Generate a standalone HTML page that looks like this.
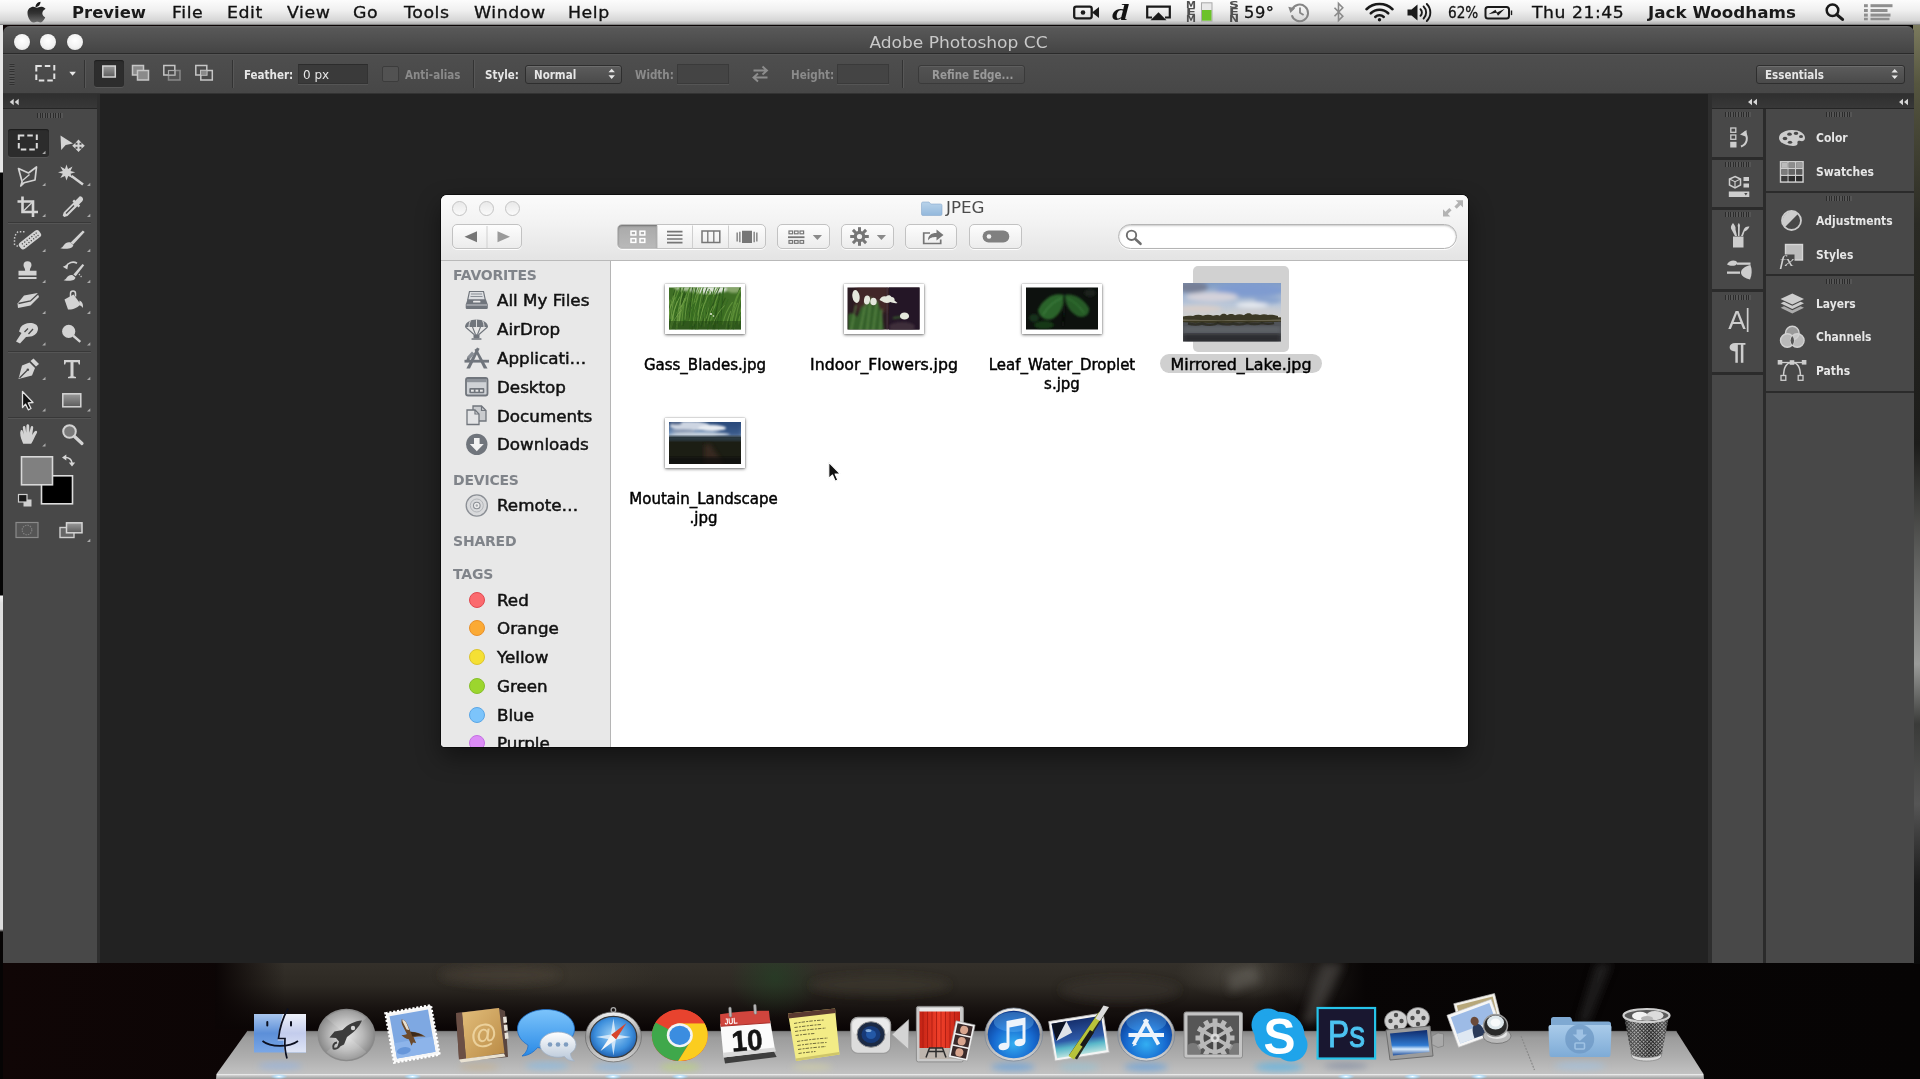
<!DOCTYPE html>
<html lang="en">
<head>
<meta charset="utf-8">
<title>Adobe Photoshop CC</title>
<style>
*{box-sizing:border-box;margin:0;padding:0}
html,body{width:1920px;height:1079px;overflow:hidden;background:#070303}
body{position:relative;font-family:"DejaVu Sans","Liberation Sans",sans-serif;color:#000}
.abs{position:absolute}
/* ---------- wallpaper ---------- */
#wall{left:0;top:0;width:1920px;height:1079px;background:linear-gradient(90deg,#100606 0,#0b0505 300px,#080505 1300px,#060404 1920px)}
#wallblur{left:215px;top:963px;width:1150px;height:66px;background:
 linear-gradient(90deg,#0b0505 0,rgba(11,5,5,0) 70px,rgba(11,5,5,0) 1040px,#080505 1150px),
 radial-gradient(ellipse 45px 40px at 560px 14px,rgba(34,70,38,.55),rgba(34,70,38,0) 100%),
 radial-gradient(ellipse 70px 26px at 1030px 10px,rgba(96,92,84,.5),rgba(96,92,84,0) 100%),
 radial-gradient(ellipse 40px 30px at 1105px 18px,rgba(90,88,84,.45),rgba(90,88,84,0) 100%),
 radial-gradient(ellipse 120px 22px at 330px 12px,rgba(70,64,52,.5),rgba(70,64,52,0) 100%),
 linear-gradient(#34302a 0,#2d2923 22px,#171210 46px,#0a0505 66px)}
#wallright{left:1913px;top:24px;width:7px;height:940px;background:linear-gradient(#7c7b5e 0,#55553f 60px,#2a2a24 200px,#1c1c1a 420px,#6d6e6c 560px,#9a9b99 640px,#3a3b39 700px,#555 780px,#1a1a1a 860px,#0a0a0a 940px)}
/* ---------- menu bar ---------- */
#menubar{left:0;top:0;width:1920px;height:25px;background:linear-gradient(#fcfcfc 0,#f0f0f0 40%,#d6d6d6 82%,#b4b4b4 94%,#6e6e6e 100%)}
#menubar .mi{-webkit-text-stroke:.3px #111;position:absolute;top:1px;height:24px;line-height:25px;font-size:15.5px;white-space:nowrap;color:#111;transform-origin:0 50%;transform:scaleX(1.12);letter-spacing:.5px}
#menubar .b{font-weight:bold;-webkit-text-stroke:0;color:#1a1a1a;transform:scaleX(1.08);letter-spacing:0}
/* ---------- left strip ---------- */
#lstrip{left:0;top:25px;width:3px;height:1054px;background:linear-gradient(#e6e6e6 0,#e6e6e6 147px,#050505 148px,#050505 570px,#f4f4f4 571px,#dedede 578px,#dcdcdc 904px,#060404 907px)}
/* ---------- Photoshop ---------- */
#ps{left:3px;top:26px;width:1911px;height:937px;background:#222;border-radius:7px 7px 0 0;overflow:hidden}
#pstitle{left:0;top:0;width:100%;height:28px;background:linear-gradient(#6a6a6a 0,#585858 2px,#4d4d4d 60%,#444 100%);border-bottom:1px solid #2a2a2a}
#pstitle .t{position:absolute;left:0;width:100%;top:1.5px;transform:scaleX(1.066);line-height:29px;text-align:center;font-size:16px;color:#c9c9c9}
.tl{position:absolute;top:7.5px;width:16px;height:16px;border-radius:50%;background:radial-gradient(circle at 50% 40%,#fff 0,#f2f2f2 55%,#d6d6d6 100%);box-shadow:0 0 1px #333}
#psopt{left:0;top:28px;width:100%;height:40px;background:linear-gradient(#4e4e4e,#474747);border-top:1px solid #555;border-bottom:1px solid #333}
.pt{will-change:transform;position:absolute;font-family:"DejaVu Sans Condensed","DejaVu Sans","Liberation Sans",sans-serif;font-weight:bold;font-size:11.5px;color:#e6e6e6;white-space:nowrap;line-height:14px}
.pt.pl{transform-origin:0 50%;transform:scaleX(1.04)}
.pt.dim{color:#8b8b8b}
.pin{position:absolute;background:#3a3a3a;border:1px solid #333;border-top-color:#2c2c2c;box-shadow:0 1px 0 #555}
.pbtn{position:absolute;background:linear-gradient(#5c5c5c,#4a4a4a);border:1px solid #2e2e2e;border-radius:3px;box-shadow:inset 0 1px 0 #6d6d6d}
.vsep{position:absolute;width:2px;background:linear-gradient(90deg,#333 50%,#575757 50%)}
#ptools{left:0;top:68px;width:94px;height:869px;background:#484848}
#pcanvasL{left:94px;top:68px;width:3px;height:869px;background:#2e2e2e}
.phead{position:absolute;height:14px;background:linear-gradient(#2f2f2f,#383838);border-bottom:1px solid #252525}
.grip{position:absolute;height:5px;background:repeating-linear-gradient(90deg,#2b2b2b 0,#2b2b2b 1px,#555 1px,#555 2.6px)}
.pg{background:#484848}
.hsep{position:absolute;height:2px;background:linear-gradient(#383838 50%,#555 50%)}
/* ---------- Finder ---------- */
#fd{left:441px;top:195px;width:1027px;height:552px;background:#fff;border-radius:6px 6px 4px 4px;overflow:hidden;box-shadow:0 0 0 1px rgba(0,0,0,.5),0 10px 24px rgba(0,0,0,.45)}
#fdtb{left:0;top:0;width:100%;height:66px;background:linear-gradient(#fbfbfb 0,#f3f3f3 40%,#e4e4e4 100%);border-bottom:1px solid #b9b9b9}
#fdside{left:0;top:66px;width:170px;height:486px;background:#e8e8e8;border-right:1px solid #b5b5b5}
.ftl{position:absolute;top:6px;width:15px;height:15px;border-radius:50%;background:linear-gradient(#e9e9e9,#fafafa);border:1px solid #c3c3c3}
.fbtn{position:absolute;top:29px;height:25px;border:1px solid #c2c2c2;border-radius:5px;background:linear-gradient(#fdfdfd,#ececec);box-shadow:0 1px 0 rgba(255,255,255,.9)}
.sh{will-change:transform;position:absolute;left:12px;font-size:14px;font-weight:bold;color:#80848a;line-height:18px;letter-spacing:-.2px}
.si{-webkit-text-stroke:.5px #111;position:absolute;left:55.5px;margin-top:1px;transform-origin:0 50%;transform:scaleX(1.045);font-size:16px;color:#111;line-height:22px;white-space:nowrap;text-shadow:0 1px 0 rgba(255,255,255,.7)}
.sic{position:absolute;left:24px;width:24px;height:24px}
.dot{position:absolute;left:28px;width:16px;height:16px;border-radius:50%}
  .fl{-webkit-text-stroke:.45px #000;position:absolute;margin-top:1.5px;font-size:15px;line-height:19.5px;text-align:center;color:#000;white-space:nowrap}
.th{position:absolute;background:#fff;box-shadow:0 1px 3px rgba(0,0,0,.55),0 0 1px rgba(0,0,0,.4)}
.th i{position:absolute;left:4px;top:4px;right:4px;bottom:4px;display:block}
/* ---------- Dock ---------- */
#dock{left:0;top:990px;width:1920px;height:89px}
#menubar,#ps,#fd,#dock{filter:blur(.4px)}
#pst{will-change:transform}
</style>
</head>
<body>
<div id="wall" class="abs"></div>
<div id="wallblur" class="abs"></div>
<svg class="abs" style="left:0;top:963px" width="1920" height="70" viewBox="0 963 1920 70"><defs><filter id="wb" x="-20%" y="-20%" width="140%" height="140%"><feGaussianBlur stdDeviation="4"/></filter></defs><g filter="url(#wb)"><path d="M1322 963h22l-28 60h-14z" fill="#56544f" opacity=".55"/><path d="M1596 963h16l-24 60h-10z" fill="#3a3a38" opacity=".5"/><path d="M1228 975l26-8 6 14-30 12z" fill="#6a6862" opacity=".45"/><ellipse cx="500" cy="975" rx="60" ry="9" fill="#4a443a" opacity=".5"/><ellipse cx="880" cy="985" rx="70" ry="10" fill="#413b33" opacity=".5"/><ellipse cx="1120" cy="990" rx="60" ry="12" fill="#3c3630" opacity=".5"/></g></svg>
<div id="wallright" class="abs"></div>
<div id="lstrip" class="abs"></div>

<!-- MENUBAR -->
<div id="menubar" class="abs">
<!--MB-->
<svg class="abs" style="left:25.500px;top:.5px" width="23" height="23" viewBox="0 0 20 22" preserveAspectRatio="none"><defs><linearGradient id="apg" x1="0" y1="0" x2="0" y2="1"><stop offset="0" stop-color="#111"/><stop offset=".55" stop-color="#333"/><stop offset="1" stop-color="#6a6a6a"/></linearGradient></defs><path fill="url(#apg)" d="M13.6 0.2c.1 1.3-.4 2.5-1.100 3.400-.8.900-2 1.600-3.200 1.500-.1-1.200.500-2.500 1.200-3.300C11.300.900 12.600.300 13.600.200zM17.300 7.600c-.2.100-2.100 1.200-2.100 3.600 0 2.800 2.400 3.700 2.500 3.800 0 .1-.4 1.300-1.300 2.600-.8 1.100-1.600 2.300-2.900 2.300-1.200 0-1.600-.7-3.100-.7-1.400 0-1.900.8-3.100.8-1.200 0-2.100-1.100-3-2.400C3.200 16 2.300 13.400 2.300 10.900c0-3.900 2.600-6 5.100-6 1.300 0 2.400.9 3.200.9.800 0 2-.9 3.500-.9.600 0 2.600.1 3.900 2z" transform="translate(-1 0.6)"/></svg>
<span class="mi b" id="m1" style="left:71.5px;transform:scaleX(1.06)">Preview</span>
<span class="mi" id="m2" style="left:171.5px">File</span>
<span class="mi" id="m3" style="left:226.5px">Edit</span>
<span class="mi" id="m4" style="left:286.5px">View</span>
<span class="mi" id="m5" style="left:353px">Go</span>
<span class="mi" id="m6" style="left:403.5px">Tools</span>
<span class="mi" id="m7" style="left:474px">Window</span>
<span class="mi" id="m8" style="left:568px">Help</span>
<span class="mi" id="m9" style="left:1243.5px;transform:scaleX(1.05)">59°</span>
<span class="mi" id="m10" style="left:1447.5px;transform:scaleX(.88);letter-spacing:0">62%</span>
<span class="mi" id="m11" style="left:1531.5px;transform:scaleX(1.11)">Thu 21:45</span>
<span class="mi b" id="m12" style="left:1647.5px">Jack Woodhams</span>
<svg class="abs" style="left:1060px;top:0" width="860" height="25" viewBox="1060 0 860 25">
<!-- camera -->
<rect x="1074.200" y="6.700" width="17.500" height="11.600" rx="2" fill="none" stroke="#1a1a1a" stroke-width="2.300"/><circle cx="1083" cy="12.500" r="2.300" fill="#1a1a1a"/><path d="M1092 12.500L1099 7v11z" fill="#1a1a1a"/>
<!-- d -->
<text x="1112" y="19.500" font-family="'Liberation Serif',serif" font-weight="bold" font-style="italic" font-size="24" fill="#111" textLength="16.500" lengthAdjust="spacingAndGlyphs">d</text>
<!-- airplay -->
<path d="M1152 17.500h-4.800v-10.800h22.600v10.800h-4.800" fill="none" stroke="#1a1a1a" stroke-width="2.200"/><path d="M1158.500 12.300l8 7.900h-16z" fill="#1a1a1a"/>
<!-- MEM -->
<g font-family="'DejaVu Sans','Liberation Sans',sans-serif" font-weight="bold" font-size="8.300" fill="#505050"><text x="1186" y="8.200" textLength="10" lengthAdjust="spacingAndGlyphs">M</text><text x="1186" y="15" textLength="10" lengthAdjust="spacingAndGlyphs">E</text><text x="1186" y="21.800" textLength="10" lengthAdjust="spacingAndGlyphs">M</text>
<text x="1229" y="8.200" textLength="10" lengthAdjust="spacingAndGlyphs">S</text><text x="1229" y="15" textLength="10" lengthAdjust="spacingAndGlyphs">E</text><text x="1229" y="21.800" textLength="10" lengthAdjust="spacingAndGlyphs">N</text></g>
<rect x="1201.500" y="2.800" width="10.500" height="18.400" fill="#e9e9e9" stroke="#a9a9a9" stroke-width="1"/><rect x="1202" y="10" width="9.500" height="10.700" fill="#6cc22a"/>
<!-- time machine -->
<g fill="none" stroke="#858585" stroke-width="2"><path d="M1292.200 9.500a8.300 8.300 0 1 1-.4 5.800"/><path d="M1300 7.500v5.200l3.600 2.200" stroke-width="1.800"/></g><path d="M1288.300 6.800l6.800 1.400-4.700 4.800z" fill="#858585"/>
<!-- bluetooth -->
<path d="M1334.500 7.800l8.300 8.400-4.300 4.300v-17l4.300 4.300-8.300 8.400" fill="none" stroke="#8a8a8a" stroke-width="1.600"/>
<!-- wifi -->
<g fill="none" stroke="#1a1a1a" stroke-width="2.600" stroke-linecap="round"><path d="M1366.500 9.200a19 19 0 0 1 26 0"/><path d="M1370.800 13.300a12.600 12.600 0 0 1 17.400 0"/><path d="M1375.200 17a6.300 6.300 0 0 1 8.600 0" stroke-width="2.400"/></g><circle cx="1379.500" cy="19.800" r="1.700" fill="#1a1a1a"/>
<!-- volume -->
<path d="M1407.500 9.500h4l6-5v16l-6-5h-4z" fill="#1a1a1a"/><g fill="none" stroke="#1a1a1a" stroke-width="1.900" stroke-linecap="round"><path d="M1420.500 9.200a4.600 4.600 0 0 1 0 6.600"/><path d="M1423.600 6.500a8.400 8.400 0 0 1 0 12"/><path d="M1426.800 4a12 12 0 0 1 0 17"/></g>
<!-- battery -->
<rect x="1485.500" y="7" width="23.500" height="11.600" rx="2.500" fill="none" stroke="#1a1a1a" stroke-width="2"/><path d="M1510.800 10.500h1.400v4.600h-1.400z" fill="#1a1a1a"/><path d="M1488.500 14.300l7-4.500 1.500 2.600 7.800-3.700-6.800 7-1.700-3z" fill="#1a1a1a"/>
<!-- search -->
<circle cx="1832.500" cy="10.300" r="5.800" fill="none" stroke="#1a1a1a" stroke-width="2.500"/><path d="M1836.800 14.600l5.700 4.800" stroke="#1a1a1a" stroke-width="3.200" stroke-linecap="round"/>
<!-- list -->
<g fill="#8e8e8e"><rect x="1864" y="4.200" width="3.800" height="3"/><rect x="1870.500" y="4.200" width="22" height="3"/><rect x="1864" y="9" width="3.800" height="3"/><rect x="1870.500" y="9" width="17" height="3"/><rect x="1864" y="13.600" width="3.800" height="3"/><rect x="1870.500" y="13.600" width="20" height="3"/><rect x="1864" y="17.800" width="3.800" height="2.500"/><rect x="1870.500" y="17.800" width="19" height="2.500"/></g>
</svg>
<!--/MB-->
</div>

<!-- PHOTOSHOP -->
<div id="ps" class="abs">
<!--PS-->
<div id="pstitle" class="abs"><div class="t"><span id="pst">Adobe Photoshop CC</span></div>
<div class="tl" style="left:10.700px"></div><div class="tl" style="left:37.300px"></div><div class="tl" style="left:64.300px"></div></div>
<div id="psopt" class="abs"></div>
<div id="ptools" class="abs"></div>
<div id="pcanvasL" class="abs"></div>
<div class="phead" style="left:0;top:68px;width:94px;height:15px"></div>
<div class="grip" style="left:34px;top:87px;width:26px"></div>
<div class="abs" style="left:5px;top:103px;width:41px;height:28px;background:#2c2c2c;border-radius:3px;box-shadow:inset 0 1px 1px #1c1c1c,0 1px 0 #555"></div>
<div class="hsep" style="left:5px;top:196px;width:83px"></div>
<div class="hsep" style="left:5px;top:325px;width:83px"></div>
<div class="hsep" style="left:5px;top:391px;width:83px"></div>
<!-- right dock -->
<div class="abs" style="left:1705px;top:68px;width:4px;height:869px;background:#2e2e2e"></div>
<div class="abs" style="left:1709px;top:68px;width:202px;height:869px;background:#2b2b2b"></div>
<div class="phead" style="left:1709px;top:68px;width:202px;height:15px"></div>
<!-- col1 groups -->
<div class="abs pg" style="left:1709px;top:83px;width:51px;height:47.500px"></div>
<div class="abs pg" style="left:1709px;top:133.500px;width:51px;height:47px"></div>
<div class="abs pg" style="left:1709px;top:183.500px;width:51px;height:79.500px"></div>
<div class="abs pg" style="left:1709px;top:266px;width:51px;height:79.500px"></div>
<div class="abs pg" style="left:1709px;top:348.500px;width:51px;height:588.500px"></div>
<div class="grip" style="left:1722px;top:85.500px;width:26px"></div>
<div class="grip" style="left:1722px;top:136px;width:26px"></div>
<div class="grip" style="left:1722px;top:186px;width:26px"></div>
<div class="grip" style="left:1722px;top:268.500px;width:26px"></div>
<!-- col2 groups -->
<div class="abs pg" style="left:1763px;top:83px;width:148px;height:81.500px"></div>
<div class="abs pg" style="left:1763px;top:167px;width:148px;height:80.500px"></div>
<div class="abs pg" style="left:1763px;top:250px;width:148px;height:114.500px"></div>
<div class="abs pg" style="left:1763px;top:367px;width:148px;height:570px"></div>
<div class="grip" style="left:1823px;top:85.500px;width:26px"></div>
<div class="grip" style="left:1823px;top:169.500px;width:26px"></div>
<div class="grip" style="left:1823px;top:252.500px;width:26px"></div>
<span class="pt pl" style="left:1812.500px;top:104.500px">Color</span>
<span class="pt pl" style="left:1812.500px;top:138.500px">Swatches</span>
<span class="pt pl" style="left:1812.500px;top:187.500px">Adjustments</span>
<span class="pt pl" style="left:1812.500px;top:221.500px">Styles</span>
<span class="pt pl" style="left:1812.500px;top:270.500px">Layers</span>
<span class="pt pl" style="left:1812.500px;top:304px">Channels</span>
<span class="pt pl" style="left:1812.500px;top:337.500px">Paths</span>
<!-- options bar widgets -->
<div class="grip" style="left:-2px;top:46px;width:22px;transform:rotate(90deg);opacity:.8"></div>
<div class="vsep" style="left:81px;top:34px;height:28px"></div>
<div class="abs" style="left:91px;top:34px;width:30px;height:27px;background:#2d2d2d;border-radius:3px;box-shadow:inset 0 1px 1px #1e1e1e,0 1px 0 #585858"></div>
<div class="vsep" style="left:229px;top:34px;height:28px"></div>
<span class="pt" id="o1" style="left:240.500px;top:42px">Feather:</span>
<div class="pin" style="left:295px;top:38px;width:70px;height:20px"></div>
<span class="pt" id="o2" style="left:300px;top:42px;font-weight:normal;font-size:12px;font-family:'DejaVu Sans',sans-serif">0 px</span>
<div class="abs" style="left:378.500px;top:39.500px;width:17px;height:16px;background:#525252;border:1px solid #3c3c3c;border-radius:2px"></div>
<span class="pt dim" id="o3" style="left:401.500px;top:42px">Anti-alias</span>
<div class="vsep" style="left:469.500px;top:34px;height:28px"></div>
<span class="pt" id="o4" style="left:481.500px;top:42px">Style:</span>
<div class="pbtn" style="left:522px;top:38.500px;width:96.500px;height:19px"></div>
<span class="pt" id="o5" style="left:530.500px;top:42px">Normal</span>
<span class="pt dim" id="o6" style="left:632px;top:42px">Width:</span>
<div class="pin" style="left:674px;top:38px;width:52px;height:20px;background:#444;border-color:#3a3a3a"></div>
<span class="pt dim" id="o7" style="left:788px;top:42px">Height:</span>
<div class="pin" style="left:834px;top:38px;width:52px;height:20px;background:#444;border-color:#3a3a3a"></div>
<div class="vsep" style="left:898.500px;top:34px;height:28px"></div>
<div class="pbtn" style="left:914.500px;top:39px;width:107.500px;height:19px;background:linear-gradient(#535353,#4a4a4a);border-color:#3a3a3a;box-shadow:inset 0 1px 0 #5e5e5e"></div>
<span class="pt dim" id="o8" style="left:928.500px;top:42px;color:#9a9a9a">Refine Edge...</span>
<div class="pbtn" style="left:1753px;top:38.500px;width:148.500px;height:19.500px"></div>
<span class="pt" id="o9" style="left:1761.500px;top:42px">Essentials</span>
<!--PSSVG-->
<svg class="abs" style="left:0;top:0" width="1911" height="937" viewBox="3 26 1911 937">
<defs><linearGradient id="gsq" x1="0" y1="0" x2="0" y2="1"><stop offset="0" stop-color="#9a9a9a"/><stop offset="1" stop-color="#5c5c5c"/></linearGradient>
<path id="cm" d="M0 0l3.300 0 0 -3.300z" fill="#a9a9a9"/></defs>
<!-- header collapse arrows -->
<g fill="#d6d6d6"><path d="M9.700 102l4-3.200v6.400zM14.700 102l4-3.200v6.400z"/><path d="M1748 102l4-3.200v6.400zM1753 102l4-3.200v6.400z"/><path d="M1899 102l4-3.200v6.400zM1904 102l4-3.200v6.400z"/></g>
<!-- options bar icons -->
<rect x="36.300" y="66" width="18" height="14.500" fill="none" stroke="#e2e2e2" stroke-width="2" stroke-dasharray="5.500 3"/>
<path d="M69.300 71.800h6.600l-3.300 4z" fill="#e8e8e8"/>
<rect x="102.800" y="66" width="12.500" height="11" fill="url(#gsq)" stroke="#d2d2d2" stroke-width="1.500"/>
<g stroke="#c6c6c6" stroke-width="1.500"><rect x="132.500" y="65.500" width="11" height="9.500" fill="#8a8a8a"/><rect x="137.500" y="70.500" width="11" height="9.500" fill="#8a8a8a"/>
<rect x="168.500" y="70.500" width="11.500" height="9.500" fill="#555" stroke="#888"/><rect x="163.800" y="65.500" width="11" height="9.500" fill="#4a4a4a"/><rect x="168.500" y="70.500" width="6.300" height="4.500" fill="#4a4a4a" stroke="#aaa" stroke-width="1.200"/>
<rect x="195.800" y="65.500" width="11" height="9.500" fill="none"/><rect x="200.800" y="70.500" width="11.500" height="9.500" fill="none"/><rect x="201" y="70.700" width="5.600" height="4.100" fill="#8a8a8a" stroke="none"/></g>
<!-- dropdown arrows -->
<g fill="#e6e6e6"><path d="M608.500 72.300l3.200-3.600 3.200 3.600zM608.500 75.300l3.200 3.600 3.200-3.600z"/><path d="M1891.500 72.500l3.200-3.600 3.200 3.600zM1891.500 75.500l3.200 3.600 3.200-3.600z"/></g>
<!-- swap arrows -->
<g fill="none" stroke="#8d8d8d" stroke-width="1.900"><path d="M753.500 70.500h13.500M762.500 66.500l4.500 4-4.500 4" /><path d="M767.500 77.500h-14M758 73.500l-4.500 4 4.500 4"/></g>
<!-- TOOLBOX ICONS -->
<g id="tools" fill="#d3d3d3" stroke="none">
<!-- r1 marquee, move -->
<rect x="18.800" y="135.500" width="18" height="14" fill="none" stroke="#dadada" stroke-width="2" stroke-dasharray="5.500 3"/>
<path d="M60.500 135.500l12.500 8-7.300 1.500-4.500 5z"/><path d="M78.500 139.500l3 3.300h-2v2h2v-2l3.300 3-3.300 3v-2h-2v2h2l-3 3.300-3-3.300h2v-2h-2v2l-3.300-3 3.300-3v2h2v-2h-2z"/>
<!-- r2 poly lasso, wand -->
<path d="M18.500 168.500l10 4.500 8-6-1.500 13-11 2.800-3.200 3.200 1.300-4.300z" fill="none" stroke="#d3d3d3" stroke-width="1.700" stroke-linejoin="round"/><path d="M22.500 180.500l7-6" stroke="#d3d3d3" stroke-width="1.300" fill="none"/>
<path d="M66.500 164.500l1.500 4.500 4.500-2.500-2 4.500 4.800 1.200-4.800 1.600 2 4.200-4.300-2-1.700 4.500-1.500-4.500-4.700 2 2.500-4.200-4.800-1.600 4.800-1.200-2.500-4.500 4.700 2.500z"/><path d="M71.500 176l11.500 8.500" stroke="#d3d3d3" stroke-width="2.600" fill="none"/>
<!-- r3 crop, eyedropper -->
<path d="M22.500 196.500v15.500h15.500M17.500 201.500h15.500v15.500" fill="none" stroke="#d6d6d6" stroke-width="2.600"/><path d="M23 211.500l10.500-10.500" stroke="#d6d6d6" stroke-width="1.200"/>
<path d="M80 196.200a3 3 0 0 1 2.300 5l-3.300 3.300 1.200 1.200-1.700 1.700-1.200-1.200-9.800 9.800-3.300 1.100-1.500-1.500 1.100-3.300 9.800-9.800-1.200-1.200 1.700-1.700 1.200 1.200 3.300-3.300a3 3 0 0 1 1.400-1.300z"/><path d="M66 213.500l8-8" stroke="#484848" stroke-width="1.500"/>
<!-- r4 heal, brush -->
<path d="M24.500 231.800h-6.500a10 10 0 0 0-3.500 7.500v5l4 2.500" fill="none" stroke="#c9c9c9" stroke-width="1.500" stroke-dasharray="1.500 1.700"/><rect x="17.500" y="235.800" width="25" height="8" rx="3" transform="rotate(-38 30 239.800)"/><g fill="#484848" transform="rotate(-38 30 239.800)"><circle cx="21.500" cy="238.300" r=".7"/><circle cx="24.500" cy="238.300" r=".7"/><circle cx="27.500" cy="238.300" r=".7"/><circle cx="30.500" cy="238.300" r=".7"/><circle cx="33.500" cy="238.300" r=".7"/><circle cx="36.500" cy="238.300" r=".7"/><circle cx="39" cy="238.300" r=".7"/><circle cx="21.500" cy="241.300" r=".7"/><circle cx="24.500" cy="241.300" r=".7"/><circle cx="27.500" cy="241.300" r=".7"/><circle cx="30.500" cy="241.300" r=".7"/><circle cx="33.500" cy="241.300" r=".7"/><circle cx="36.500" cy="241.300" r=".7"/><circle cx="39" cy="241.300" r=".7"/></g>
<path d="M82.800 230.500l1.900 1.500-11.500 12.500-2.500-2z"/><path d="M70.300 242.300l3 2.600c0 3-5.500 5-13 3.300 1.500-.5 2.500-1.500 3.500-3 1.500-2.500 4-3.500 6.500-2.900z"/>
<!-- r5 stamp, history brush -->
<path d="M27.500 261.300a4 4 0 0 1 4 4c0 2-1.700 3-1.700 5.500h6.700v4.700h-18v-4.700h6.700c0-2.500-1.700-3.500-1.700-5.500a4 4 0 0 1 4-4z"/><rect x="18.500" y="277" width="18" height="2"/>
<path d="M82.500 264l1.700 1.300-8.500 11-2.300-1.800z"/><path d="M72.800 275.300l2.600 2.200c0 2.700-5 4.200-11.800 2.700 1.400-.4 2.300-1.300 3.200-2.600 1.400-2.200 3.700-3 6-2.300z"/><path d="M66 266.500a8 8 0 0 1 11-3.300" fill="none" stroke="#d3d3d3" stroke-width="1.700"/><path d="M62.800 266.800l5.300-2.300-.8 5z"/><path d="M79 274l3 3.500" stroke="#bdbdbd" stroke-width="1.300" stroke-dasharray="1.300 1.300"/>
<!-- r6 eraser, bucket -->
<path d="M24 295.500l13.500-2.500 1.500 4-8.500 8.500-12.500 2.500-.5-4.500z"/><path d="M18.500 303.500l12-2.500 8-7.500" fill="none" stroke="#484848" stroke-width="1.300"/>
<path d="M64.500 299.500l9-5 7 9.500c-2 3.500-8.500 6-12.500 5.500z"/><path d="M70.500 298.500v-5a2.500 2.500 0 0 1 5 0v3" fill="none" stroke="#d3d3d3" stroke-width="1.500"/><path d="M79.500 300.500c2.500 1 3.800 3 3.500 7.500-1.500-2-2.500-2.500-4-3z"/>
<!-- r7 smudge, dodge -->
<path d="M20.500 327.500c2-3.500 7-5 11-4.500 4 .5 6.500 2.500 6.500 5.500 0 4-3 7.500-7.500 8l-4.500.5-6 6.500-4-2 5.500-8.500-2.500-1.500z"/><path d="M24.500 332l3.500-3.500M28.500 334l4.500-5" stroke="#484848" stroke-width="1.300"/>
<circle cx="68.700" cy="331.400" r="6.600"/><path d="M73 335.500l7.300 6.300" stroke="#d3d3d3" stroke-width="2.400"/>
<!-- r8 pen, T -->
<path d="M33.500 358.500l5.500 5.500-3 2.500-5.500-5.500z"/><path d="M29.500 362.500l5.500 5.500-3 7.500-13.500 3.500 3.500-13.500z"/><path d="M19.500 378l7.500-7.500" stroke="#484848" stroke-width="1.200"/><circle cx="27.800" cy="369.800" r="1.300" fill="#484848"/>
<path d="M64 360h16v4.500h-1.200l-.8-2.300h-4.500v14l2.500.8v1.200h-8v-1.200l2.500-.8v-14h-4.500l-.8 2.300h-1.200z"/>
<!-- r9 arrow, rect -->
<path d="M22.500 391.500l10.500 11-4.800.3 2.800 5.700-2.700 1.300-2.800-5.700-3 3.500z" fill="#111" stroke="#e2e2e2" stroke-width="1.300" stroke-linejoin="round"/>
<rect x="62.800" y="393.800" width="18" height="13" fill="url(#gsq)" stroke="#d6d6d6" stroke-width="1.500"/>
<!-- r10 hand, zoom -->
<path d="M20.500 431.500c0-2 2-2 2.300-.3l.8 3.300-.8-7c0-2 2.300-2.200 2.600-.3l.8 5.500.2-7c.2-2 2.600-2 2.800 0l.2 7 1.300-5.500c.5-1.800 2.700-1.300 2.500.5l-1 7.300c1.300-2.200 2.300-4 3.700-4.200 1.500 0 1.500 1.500.8 2.500-2 3-3 7-5.500 10.500h-8c-1.500-3.500-3-7-3-11z"/>
<circle cx="69.500" cy="431.500" r="6.300" fill="#7a7a7a" stroke="#d3d3d3" stroke-width="2"/><path d="M74.500 436.500l7.500 7" stroke="#d3d3d3" stroke-width="3.200" stroke-linecap="round"/>
</g>
<!-- corner marks -->
<g><use href="#cm" x="42.200" y="154"/><use href="#cm" x="42.200" y="186"/><use href="#cm" x="87" y="186"/><use href="#cm" x="42.200" y="217"/><use href="#cm" x="87" y="217"/><use href="#cm" x="42.200" y="252"/><use href="#cm" x="87" y="252"/><use href="#cm" x="42.200" y="283"/><use href="#cm" x="87" y="283"/><use href="#cm" x="42.200" y="314"/><use href="#cm" x="87" y="314"/><use href="#cm" x="42.200" y="345.500"/><use href="#cm" x="87" y="345.500"/><use href="#cm" x="42.200" y="380"/><use href="#cm" x="87" y="380"/><use href="#cm" x="42.200" y="411.500"/><use href="#cm" x="87" y="411.500"/><use href="#cm" x="42.200" y="446.500"/><use href="#cm" x="87" y="542"/></g>
<!-- colors -->
<rect x="41.500" y="475.800" width="31" height="28" fill="#000" stroke="#dcdcdc" stroke-width="1.600"/>
<rect x="21.500" y="456.800" width="31" height="28" fill="#808080" stroke="#d8d8d8" stroke-width="1.600"/>
<path d="M65.500 457.500a6 6 0 0 1 6.500 5.500" fill="none" stroke="#d6d6d6" stroke-width="1.600"/><path d="M62 457.500l4.300-3v6zM72 466.500l-3.200-4h6.400z" fill="#d6d6d6"/>
<rect x="23.500" y="499.500" width="8" height="7" fill="#d0d0d0"/><rect x="18.500" y="494.500" width="8.500" height="7.500" fill="#1a1a1a" stroke="#cfcfcf" stroke-width="1.200"/>
<!-- quick mask / screen mode -->
<rect x="16" y="522.500" width="22" height="15" fill="#555" stroke="#8a8a8a" stroke-width="1.200"/><circle cx="27" cy="530" r="4.800" fill="none" stroke="#7e7e7e" stroke-width="1.200" stroke-dasharray="1.500 1"/>
<rect x="60" y="527.500" width="14" height="10" fill="#666" stroke="#cfcfcf" stroke-width="1.400"/><rect x="66.500" y="522.800" width="15.500" height="10" fill="url(#gsq)" stroke="#d6d6d6" stroke-width="1.500"/>
<!-- RIGHT PANEL ICONS -->
<!--RPS-->
<g fill="#cdcdcd">
<!-- history -->
<g fill="none" stroke="#cdcdcd" stroke-width="1.300"><rect x="1730.800" y="128" width="5" height="4.300"/><rect x="1730.800" y="135" width="5" height="4.300"/></g><rect x="1730.200" y="141.800" width="6.300" height="5.700"/>
<path d="M1741 146.500c6-2 8-9 3-14.500" fill="none" stroke="#cdcdcd" stroke-width="2"/><path d="M1740 134.500l6.500-4.500.5 7z"/>
<!-- 3d/properties -->
<path d="M1735 176.500l5.500 2.500v6l-5.500 3-5.500-3v-6z" fill="none" stroke="#cdcdcd" stroke-width="1.500"/><path d="M1729.500 179l5.500 2.700 5.500-2.700M1735 181.700v6" fill="none" stroke="#cdcdcd" stroke-width="1.200"/><rect x="1743.500" y="177" width="5.500" height="4"/><rect x="1743.500" y="183.500" width="5.500" height="4"/><rect x="1728.800" y="191.500" width="20.500" height="5.500"/><path d="M1744.200 193l3.300 0-1.650 2.500z" fill="#484848"/>
<!-- brush presets -->
<rect x="1733" y="236.500" width="10.500" height="11"/><path d="M1735 236l-3.500-6.500c-1.500-3 .5-5 1.500-6.500 1.500 2 3 3.500 2.500 6.500l1.500 6.500zM1738 236v-9c-.8-2 .2-3 .8-4 .8 1 1.600 2 1 4l-.300 9zM1741 236l2.500-6c1-3 3.500-4 6-3.500-1 2.500-2.500 4-5 5l-1.500 4.500z"/>
<!-- brush -->
<path d="M1727 264.500c1.500-3.500 6-5 9-3.500 1.500 1 1.500 3 0 4-3 1.500-6.500.8-9-.5z"/><rect x="1737" y="262.500" width="13.500" height="2.300"/><rect x="1727" y="271.500" width="13" height="2.300"/><path d="M1741 272.500c0-3.500 4-6 9.500-7.500 1.800 4.500 1.500 10-.5 14.500-4.500-1-9-3.500-9-7z"/>
<!-- A| -->
<text x="1728.200" y="329" font-family="'Liberation Sans',sans-serif" font-size="25" fill="#cdcdcd" textLength="17.500" lengthAdjust="spacingAndGlyphs">A</text><rect x="1746.800" y="308" width="1.700" height="24"/>
<!-- pilcrow -->
<text x="1728.500" y="359.500" font-family="'Liberation Sans',sans-serif" font-weight="bold" font-size="24" fill="#cdcdcd" textLength="18" lengthAdjust="spacingAndGlyphs">¶</text>
<!-- color palette -->
<path d="M1792 130c7.500 0 13 3.300 13 8 0 2.500-2 3.500-4.500 3-2-.5-3.500.300-3 2 .3 1.500-.8 3-4.500 3-7.500 0-14-3.500-14-8s5.500-8 13-8z"/><g fill="#484848"><ellipse cx="1785" cy="138.500" rx="2.300" ry="1.700"/><ellipse cx="1789.500" cy="134.200" rx="2.300" ry="1.600"/><ellipse cx="1796" cy="133.300" rx="2.300" ry="1.600"/><ellipse cx="1801" cy="136.500" rx="2" ry="1.600"/><ellipse cx="1790" cy="142.300" rx="2.200" ry="1.500"/></g>
<!-- swatches -->
<rect x="1780.600" y="161.800" width="22.400" height="20.200" fill="none" stroke="#cdcdcd" stroke-width="1.600"/><path d="M1788 161.800v20.200M1795.500 161.800v20.200M1780.600 168.500h22.400M1780.600 175.200h22.400" stroke="#cdcdcd" stroke-width="1.400" fill="none"/><rect x="1781.400" y="162.600" width="6" height="5.300" fill="#bbb"/><rect x="1788.700" y="162.600" width="6.200" height="5.300" fill="#8d8d8d"/><rect x="1796.200" y="162.600" width="6" height="5.300" fill="#9d9d9d"/><rect x="1781.400" y="169.200" width="6" height="5.300" fill="#7b7b7b"/><rect x="1788.700" y="176" width="6.200" height="5.200" fill="#2c2c2c"/><rect x="1796.200" y="176" width="6" height="5.200" fill="#2c2c2c"/><rect x="1781.400" y="176" width="6" height="5.200" fill="#3a3a3a"/><rect x="1796.200" y="169.200" width="6" height="5.300" fill="#5a5a5a"/><rect x="1788.700" y="169.200" width="6.200" height="5.300" fill="#666"/>
<!-- adjustments -->
<circle cx="1791.500" cy="220.500" r="9.500" fill="#484848" stroke="#cdcdcd" stroke-width="1.800"/><path d="M1798.200 213.800a9.500 9.500 0 0 0-13.400 13.400z" fill="#cdcdcd"/>
<!-- styles -->
<rect x="1785.500" y="244.500" width="17" height="15.500" fill="#bdbdbd" stroke="#d6d6d6" stroke-width="1.400"/><rect x="1779" y="254.500" width="15.500" height="13" fill="#484848"/><text x="1779.500" y="266" font-family="'Liberation Serif',serif" font-style="italic" font-size="15" fill="#d0d0d0" textLength="14.500" lengthAdjust="spacingAndGlyphs">fx</text>
<!-- layers -->
<path d="M1792.300 293.400l11.700 5.600-11.700 5.600-11.700-5.600z"/><path d="M1780.600 303.300l3.400-1.600 8.300 4 8.300-4 3.400 1.600-11.700 5.600z"/><path d="M1780.600 307.800l3.400-1.600 8.300 4 8.300-4 3.400 1.600-11.700 5.600z" opacity=".75"/>
<!-- channels -->
<circle cx="1792.300" cy="333" r="6.800" fill="#9a9a9a" stroke="#d2d2d2" stroke-width="1.400"/><circle cx="1787.300" cy="340.500" r="6.800" fill="#b9b9b9" stroke="#d2d2d2" stroke-width="1.400"/><circle cx="1797.300" cy="340.500" r="6.800" fill="#d0d0d0" stroke="#d2d2d2" stroke-width="1.400" fill-opacity=".85"/><path d="M1792.300 336a6.800 6.800 0 0 1 0 9 6.800 6.800 0 0 1 0-9z" fill="#555"/>
<!-- paths -->
<path d="M1783.500 377c0-10 3-14.500 8.500-14.500s8.500 4.500 8.500 14.500" fill="none" stroke="#cdcdcd" stroke-width="1.500"/><path d="M1780 362.500h24.500" stroke="#cdcdcd" stroke-width="1.300"/><rect x="1777.700" y="360" width="4.600" height="4.600"/><rect x="1801.800" y="360" width="4.600" height="4.600"/><rect x="1789.700" y="360.200" width="4.600" height="4.600"/><g fill="#484848" stroke="#cdcdcd" stroke-width="1.300"><rect x="1781" y="375.500" width="4.800" height="4.800"/><rect x="1798.200" y="375.500" width="4.800" height="4.800"/></g>
</g>
<!--/RPS-->
</svg>
<!--/PSSVG-->
<!--/PS-->
</div>

<!-- FINDER -->
<div id="fd" class="abs">
<!--FD-->
<div id="fdtb" class="abs"></div>
<div id="fdside" class="abs"></div>
<div class="ftl" style="left:11px"></div><div class="ftl" style="left:37.500px"></div><div class="ftl" style="left:64.300px"></div>
<span class="abs" id="fdt" style="left:504.500px;top:3px;font-size:15.500px;line-height:20px;color:#4c4c4c;transform-origin:0 50%;transform:scaleX(1.08)">JPEG</span>
<div class="fbtn" style="left:11px;width:70px"></div>
<div class="fbtn" style="left:176px;width:149px"></div>
<div class="abs" style="left:177px;top:30px;width:39px;height:23px;border-radius:4px 0 0 4px;background:linear-gradient(#a9a9a9,#b9b9b9);box-shadow:inset 0 1px 2px rgba(0,0,0,.35)"></div>
<div class="fbtn" style="left:336px;width:52.500px"></div>
<div class="fbtn" style="left:400px;width:52.500px"></div>
<div class="fbtn" style="left:464px;width:52px"></div>
<div class="fbtn" style="left:528px;width:52.500px"></div>
<div class="abs" style="left:676.500px;top:29px;width:339px;height:25px;border-radius:13px;background:#fff;border:1px solid #b4b4b4;box-shadow:inset 0 1px 2px rgba(0,0,0,.22),0 1px 0 rgba(255,255,255,.9)"></div>
<!-- sidebar -->
<span class="sh" style="top:70.500px">FAVORITES</span>
<span class="si" style="top:94px">All My Files</span>
<span class="si" style="top:123px">AirDrop</span>
<span class="si" style="top:152px">Applicati…</span>
<span class="si" style="top:181px">Desktop</span>
<span class="si" style="top:209.500px">Documents</span>
<span class="si" style="top:238px">Downloads</span>
<span class="sh" style="top:275.500px">DEVICES</span>
<span class="si" style="top:299px">Remote…</span>
<span class="sh" style="top:337px">SHARED</span>
<span class="sh" style="top:369.500px">TAGS</span>
<span class="si" style="top:393.500px">Red</span><div class="dot" style="top:396.500px;background:#fb6a6e;border:1px solid #e0484f"></div>
<span class="si" style="top:422px">Orange</span><div class="dot" style="top:425px;background:#fbaa35;border:1px solid #e8902a"></div>
<span class="si" style="top:451px">Yellow</span><div class="dot" style="top:454px;background:#f5e034;border:1px solid #dcc42e"></div>
<span class="si" style="top:480px">Green</span><div class="dot" style="top:483px;background:#9cd62e;border:1px solid #86bf2a"></div>
<span class="si" style="top:508.500px">Blue</span><div class="dot" style="top:511.500px;background:#7cc4fb;border:1px solid #5aa6e6"></div>
<span class="si" style="top:537px">Purple</span><div class="dot" style="top:540px;background:#dc8cf6;border:1px solid #c370e2"></div>
<!-- files -->
<div class="abs" style="left:752px;top:70.500px;width:96px;height:86px;background:#d1d1d1;border-radius:5px"></div>
<div class="abs" style="left:719px;top:159px;width:162px;height:19px;background:#d0d0d0;border-radius:9.500px"></div>
<div class="th" style="left:224px;top:88.500px;width:80px;height:50px"><i id="t1"></i></div>
<div class="th" style="left:402.500px;top:88.500px;width:80px;height:50px"><i id="t2"></i></div>
<div class="th" style="left:581px;top:88.500px;width:80px;height:50px"><i id="t3"></i></div>
<div class="abs" id="t4" style="left:742px;top:88px;width:98px;height:58.500px"></div>
<div class="th" style="left:224px;top:223px;width:80px;height:50px"><i id="t5"></i></div>
<span class="fl" id="f1" style="left:164px;top:159px;width:200px">Gass_Blades.jpg</span>
<span class="fl" id="f2" style="transform:scaleX(1.05);left:342.500px;top:159px;width:200px">Indoor_Flowers.jpg</span>
<span class="fl" id="f3" style="left:521px;top:159px;width:200px">Leaf_Water_Droplet<br>s.jpg</span>
<span class="fl" id="f4" style="transform:scaleX(1.06);left:699.500px;top:159px;width:200px">Mirrored_Lake.jpg</span>
<span class="fl" id="f5" style="left:162.500px;top:293px;width:200px">Moutain_Landscape<br>.jpg</span>
<!--FDSVG-->
<svg class="abs" style="left:0;top:0" width="1027" height="552" viewBox="441 195 1027 552">
<defs>
<filter id="b1" x="-10%" y="-10%" width="120%" height="120%"><feGaussianBlur stdDeviation="1.2"/></filter>
<filter id="b2" x="-10%" y="-10%" width="120%" height="120%"><feGaussianBlur stdDeviation="2.2"/></filter>
<filter id="b05" x="-10%" y="-10%" width="120%" height="120%"><feGaussianBlur stdDeviation=".6"/></filter>
<linearGradient id="gfold" x1="0" y1="0" x2="0" y2="1"><stop offset="0" stop-color="#b9d3ea"/><stop offset="1" stop-color="#93b8dc"/></linearGradient>
<linearGradient id="gsky" x1="0" y1="0" x2="0" y2="1"><stop offset="0" stop-color="#7f9cc6"/><stop offset=".6" stop-color="#b9c6d8"/><stop offset="1" stop-color="#d6d3cc"/></linearGradient>
<linearGradient id="gsky2" x1="0" y1="0" x2="0" y2="1"><stop offset="0" stop-color="#24426f"/><stop offset=".7" stop-color="#6f8fb8"/><stop offset="1" stop-color="#b8c4cf"/></linearGradient>
<linearGradient id="ggr" x1="0" y1="0" x2="1" y2="1"><stop offset="0" stop-color="#5f8a3e"/><stop offset=".5" stop-color="#3a6c22"/><stop offset="1" stop-color="#27501a"/></linearGradient>
<clipPath id="c1"><rect x="669" y="287.500" width="72" height="42"/></clipPath>
<clipPath id="c2"><rect x="847.500" y="287.500" width="72" height="42"/></clipPath>
<clipPath id="c3"><rect x="1026" y="287.500" width="72" height="42"/></clipPath>
<clipPath id="c4"><rect x="1183" y="283" width="98" height="58.500"/></clipPath>
<clipPath id="c5"><rect x="669" y="422" width="72" height="42"/></clipPath>
</defs>
<!-- title folder -->
<path d="M921.500 203.500a1.500 1.500 0 0 1 1.500-1.500h6l1.800 2h9.700a1.500 1.500 0 0 1 1.500 1.500v8.500a1.500 1.500 0 0 1-1.500 1.500h-17.500a1.500 1.500 0 0 1-1.500-1.500z" fill="url(#gfold)" stroke="#88a9cc" stroke-width=".6"/>
<!-- fullscreen -->
<g fill="#b3b3b3"><path d="M1463 200.200v7.300l-2.500-2.500-3.800 3.800-2.300-2.300 3.800-3.800-2.500-2.500z"/><path d="M1443 216.500v-7.300l2.500 2.500 3.800-3.800 2.300 2.300-3.800 3.800 2.500 2.500z"/></g>
<!-- toolbar icons -->
<g fill="#767676">
<path d="M464.500 236.700l12.500-5.500v11z"/><path d="M510 236.700l-12.500-5.500v11z" fill="#9a9a9a"/><rect x="486.500" y="226" width="1" height="22" fill="#d0d0d0"/>
<g fill="none" stroke="#fff" stroke-width="1.500"><rect x="631" y="231.200" width="4.800" height="3.800"/><rect x="640" y="231.200" width="4.800" height="3.800"/><rect x="631" y="238.600" width="4.800" height="3.800"/><rect x="640" y="238.600" width="4.800" height="3.800"/></g>
<rect x="656.500" y="225.500" width="1" height="23" fill="#b5b5b5"/><rect x="692" y="225.500" width="1" height="23" fill="#cfcfcf"/><rect x="728" y="225.500" width="1" height="23" fill="#cfcfcf"/>
<path d="M667 230.800h15.500v1.600h-15.500zM667 234.500h15.500v1.600h-15.500zM667 238.200h15.500v1.600h-15.500zM667 241.800h15.500v1.600h-15.500z"/>
<path d="M702 231h17.800v11.500h-17.800z" fill="none" stroke="#767676" stroke-width="1.500"/><path d="M707.800 231v11.500M713.800 231v11.500" stroke="#767676" stroke-width="1.300"/>
<path d="M736.500 232.500h1.300v9h-1.300zM739.200 231.800h1.300v10.400h-1.300zM742 230.800h10v12.200h-10zM753.500 231.800h1.300v10.400h-1.300zM756.200 232.500h1.300v9h-1.300z"/>
<g fill="none" stroke="#767676" stroke-width="1.200"><rect x="789" y="231" width="3.600" height="2.800"/><rect x="794.500" y="231" width="3.600" height="2.800"/><rect x="800" y="231" width="3.600" height="2.800"/><rect x="789" y="240.500" width="3.600" height="2.800"/><rect x="794.500" y="240.500" width="3.600" height="2.800"/><rect x="800" y="240.500" width="3.600" height="2.800"/></g><rect x="788" y="236.300" width="16.500" height="1.800"/>
<path d="M812.800 235h9.200l-4.600 5z" fill="#8a8a8a"/><path d="M876.800 235h9.200l-4.600 5z" fill="#8a8a8a"/>
<!-- gear -->
<g transform="translate(859.500 236.500)"><g id="gt"><rect x="-1.500" y="-9.300" width="3" height="5"/><rect x="-1.500" y="4.300" width="3" height="5"/></g><use href="#gt" transform="rotate(45)"/><use href="#gt" transform="rotate(90)"/><use href="#gt" transform="rotate(135)"/><circle r="5.800"/><circle r="2.600" fill="#f1f1f1"/></g>
<!-- share -->
<path d="M930 233h-6.300v10.500h17v-4" fill="none" stroke="#767676" stroke-width="1.700"/><path d="M928 240.500c0-5 3-7.500 8.500-7.500v-3.500l7 5.500-7 5.500v-3.500c-4 0-6.500.5-8.500 3.500z"/>
<!-- tag -->
<rect x="982.600" y="230.500" width="26.700" height="12" rx="6" fill="#808080"/><circle cx="989" cy="236.500" r="2.300" fill="#f3f3f3"/>
<!-- search -->
<circle cx="1131.500" cy="235.300" r="4.700" fill="none" stroke="#6e6e6e" stroke-width="1.900"/><path d="M1135 238.800l5.500 5" stroke="#6e6e6e" stroke-width="2.600" stroke-linecap="round"/>
</g>
<!-- sidebar icons -->
<g fill="#70757c" stroke="none">
<!-- all my files -->
<path d="M469.500 291.500h14l1.800 8.500h-17.600z" fill="#dcdee1" stroke="#70757c" stroke-width="1.200"/><path d="M471 294h11M470.500 296.500h12" stroke="#8a8f96" stroke-width="1"/><path d="M467.500 299.500h18.500l1.800 5v3.300a1.200 1.200 0 0 1-1.200 1.200h-19.700a1.200 1.200 0 0 1-1.200-1.200v-3.300z"/><rect x="466.500" y="304.500" width="20.500" height="1" fill="#c9ccd0"/><rect x="473" y="300.800" width="7.500" height="1.800" rx=".9" fill="#e8e8e8"/>
<!-- airdrop -->
<path d="M476.500 319.500c6.500 0 11.500 3.300 11.500 7.500h-23c0-4.200 5-7.500 11.500-7.500z"/><path d="M465.500 327l8.500 7.500M487.500 327l-8.500 7.500M472.500 327l3 7.500M480.500 327l-3 7.500" stroke="#70757c" stroke-width="1.100" fill="none"/><path d="M470.500 320.500c-1 2-1.500 4-1.500 6.500M482.500 320.500c1 2 1.500 4 1.500 6.500M476.500 319.500v7.500" stroke="#e8e8e8" stroke-width=".9" fill="none"/><rect x="473.500" y="334.300" width="6" height="4" rx=".8"/><rect x="471.500" y="338.300" width="10" height="1.500" rx=".5"/>
<!-- applications -->
<path d="M477 347.500l2.600 1.300-9.600 19.700h-3.600z"/><path d="M476.500 348.500l-2 1.300 9.300 18.700h3.700z"/><path d="M464.500 359.800h24.500v2.800h-24.500z"/><path d="M467 357l5-5.500 2.600 2.400-5 5.500z" fill="#8a8f96"/><path d="M466 361l1.500-4 2.600 2.500z"/>
<!-- desktop -->
<rect x="466" y="378" width="21.500" height="17.500" rx="2" fill="#cfd2d6" stroke="#70757c" stroke-width="1.800"/><rect x="467" y="379" width="19.500" height="3.200" fill="#8e939a"/><rect x="469.300" y="388" width="15" height="5.200" rx="1" /><g fill="#e8e8e8"><rect x="471" y="389.700" width="2.800" height="2"/><rect x="475.500" y="389.700" width="2.800" height="2"/><rect x="480" y="389.700" width="2.800" height="2"/></g>
<!-- documents -->
<path d="M473 406h8.500l4.500 4.500v10.500h-13z" fill="#c9cbce" stroke="#70757c" stroke-width="1.300"/><path d="M481.500 406v4.500h4.500" fill="none" stroke="#70757c" stroke-width="1.200"/><path d="M467 410h8l4 4v10.500h-12z" fill="#e3e4e6" stroke="#70757c" stroke-width="1.300"/><path d="M475 410v4h4" fill="none" stroke="#70757c" stroke-width="1.200"/>
<!-- downloads -->
<circle cx="476.800" cy="444.400" r="10.700"/><path d="M474 438h5.600v6h4.200l-7 7.200-7-7.200h4.200z" fill="#f2f2f2"/>
<!-- remote disc -->
<circle cx="476.800" cy="505.500" r="10.600" fill="#d9dadc" stroke="#8b8f95" stroke-width="1.300"/><circle cx="476.800" cy="505.500" r="6.500" fill="none" stroke="#b3b6ba" stroke-width="1"/><circle cx="476.800" cy="505.500" r="3.300" fill="#eee" stroke="#8b8f95" stroke-width="1.100"/><circle cx="476.800" cy="505.500" r="1.200" fill="#a9acb0"/>
</g>
<!-- THUMBS -->
<!--THS-->
<!-- t1 grass -->
<g clip-path="url(#c1)"><rect x="668" y="286" width="74" height="45" fill="#3f6f25"/>
<g filter="url(#b1)"><ellipse cx="708" cy="289" rx="20" ry="5" fill="#dde4d8"/><ellipse cx="686" cy="288" rx="12" ry="3" fill="#a8bf97"/><ellipse cx="734" cy="289" rx="8" ry="4" fill="#86a56a"/></g>
<g filter="url(#b05)"><path d="M689.3 320.1q1.1 -21.0 3.7 -34.9M705.8 323.1q2.3 -11.7 7.6 -19.5M666.9 324.1q1.1 -11.9 3.8 -19.8M697.1 329.6q1.5 -12.7 5.0 -21.2M712.9 331.3q2.0 -19.8 6.6 -33.0M740.1 318.7q1.7 -24.2 5.6 -40.3M675.3 319.6q3.1 -15.6 10.3 -26.0M678.1 326.1q1.9 -20.8 6.4 -34.6M706.7 318.9q1.5 -11.7 4.9 -19.5M717.1 324.0q2.5 -15.7 8.3 -26.2M699.3 322.2q2.8 -23.2 9.3 -38.7M683.0 326.0q3.3 -19.0 10.9 -31.7M720.9 322.0q1.2 -26.1 4.1 -43.5M696.6 328.6q2.2 -13.2 7.4 -22.0M667.1 327.4q2.4 -22.7 8.2 -37.9M732.3 322.4q2.5 -21.6 8.3 -36.1M709.2 324.4q3.5 -23.9 11.5 -39.8M701.0 327.3q2.8 -11.7 9.3 -19.6M714.5 331.9q1.7 -23.6 5.6 -39.4M694.1 327.4q2.1 -11.2 7.2 -18.6M677.1 319.6q3.0 -11.7 9.9 -19.5M674.1 321.5q3.3 -16.9 10.8 -28.2M670.3 324.3q3.3 -19.4 11.0 -32.3M727.9 330.1q2.0 -15.1 6.7 -25.2M692.0 330.4q1.3 -25.7 4.4 -42.9M677.7 321.2q2.2 -14.4 7.4 -24.1" stroke="#2a5518" stroke-width="1.1" fill="none" opacity="0.9"/><path d="M710.0 321.7q2.0 -10.9 6.8 -18.1M692.8 325.9q2.8 -25.7 9.2 -42.8M704.2 326.6q1.0 -21.3 3.5 -35.6M734.2 328.9q3.1 -24.4 10.2 -40.7M694.6 323.6q2.6 -12.4 8.7 -20.7M668.9 318.9q1.3 -14.1 4.5 -23.4M690.5 318.7q1.3 -10.8 4.4 -18.0M671.9 323.1q3.3 -11.2 10.9 -18.7M711.9 320.1q1.8 -14.7 6.1 -24.6M692.4 319.7q3.6 -24.0 11.9 -40.1M700.3 324.8q1.2 -12.1 3.9 -20.2M690.7 321.7q1.3 -23.7 4.5 -39.6M665.8 331.3q1.3 -19.0 4.3 -31.7M706.4 318.4q3.5 -19.0 11.8 -31.7M731.3 327.7q1.9 -14.9 6.3 -24.8M677.0 328.8q3.0 -19.1 10.0 -31.8M689.7 321.1q3.6 -23.5 11.9 -39.1M730.5 329.3q2.9 -23.6 9.7 -39.3M681.7 325.2q1.0 -16.3 3.3 -27.2M666.2 321.9q2.8 -14.8 9.2 -24.7M738.6 324.3q3.6 -25.4 11.9 -42.4M738.5 323.1q1.5 -14.2 5.0 -23.7M679.3 320.9q3.3 -20.5 11.1 -34.2M729.6 324.7q3.1 -21.0 10.2 -35.0M670.6 327.2q3.0 -25.0 10.0 -41.7M722.5 324.7q3.0 -13.6 10.1 -22.6" stroke="#5f9438" stroke-width="1.1" fill="none" opacity="0.9"/><path d="M689.9 329.2q2.0 -26.0 6.6 -43.3M695.3 331.3q1.4 -22.1 4.5 -36.8M673.9 320.1q3.1 -24.9 10.3 -41.5M675.4 329.6q2.7 -26.1 8.9 -43.5M691.3 325.7q0.9 -12.8 3.1 -21.4M739.7 327.1q3.4 -19.0 11.4 -31.7M697.8 330.2q1.5 -23.7 4.9 -39.5M683.6 322.1q2.5 -14.6 8.3 -24.3M684.2 323.9q3.4 -12.8 11.2 -21.4M691.6 324.4q3.3 -19.9 11.1 -33.2M696.8 330.8q2.3 -18.6 7.8 -31.0M704.8 318.3q1.4 -17.7 4.6 -29.4M664.3 329.2q2.2 -13.5 7.3 -22.5M720.6 325.8q2.3 -15.9 7.7 -26.5M707.3 329.0q2.4 -12.5 8.0 -20.8M683.4 321.9q2.3 -22.8 7.6 -38.1M707.8 328.6q2.1 -25.0 7.0 -41.7M711.8 325.1q2.8 -18.8 9.2 -31.3M699.3 325.5q3.4 -18.3 11.5 -30.4M718.5 330.3q1.6 -25.5 5.3 -42.5M707.6 331.2q1.3 -23.9 4.2 -39.8M673.5 324.2q1.5 -11.9 5.2 -19.9M669.7 327.4q3.3 -23.0 11.1 -38.4M676.0 328.0q1.3 -21.1 4.3 -35.2M732.9 331.5q3.5 -14.2 11.6 -23.7M695.1 324.8q3.1 -26.2 10.5 -43.7" stroke="#356a1f" stroke-width="1.1" fill="none" opacity="0.9"/><path d="M676.6 324.0q1.8 -18.8 6.1 -31.4M679.3 322.5q1.0 -22.1 3.2 -36.8M707.2 324.2q1.8 -11.1 6.0 -18.5M712.7 325.2q3.6 -11.8 11.9 -19.7M725.5 331.6q1.6 -12.4 5.4 -20.7M667.1 328.9q1.2 -15.0 4.2 -25.0M696.9 330.8q1.6 -23.6 5.3 -39.3M675.7 330.9q2.8 -19.7 9.3 -32.8M671.0 318.8q2.0 -21.5 6.8 -35.9M669.6 331.1q3.1 -20.7 10.2 -34.5M670.5 330.0q3.2 -11.8 10.8 -19.7M699.4 322.7q3.4 -19.4 11.3 -32.4M684.9 319.8q1.5 -19.0 5.1 -31.7M672.5 320.3q1.4 -11.6 4.8 -19.3" stroke="#7fae52" stroke-width="0.9" fill="none" opacity="0.7"/><rect x="668" y="321" width="74" height="10" fill="#1f4411" opacity=".5"/><circle cx="711" cy="314" r="1" fill="#e6eedc"/><circle cx="713.500" cy="316" r=".8" fill="#e6eedc"/></g></g>
<!-- t2 flowers -->
<g clip-path="url(#c2)"><rect x="847" y="286" width="74" height="45" fill="#2b1b22"/><rect x="856" y="286" width="32" height="26" fill="#47292a" opacity=".85" filter="url(#b2)"/><rect x="889" y="286" width="32" height="45" fill="#241626"/><rect x="886.500" y="286" width="1.200" height="45" fill="#4c3a46" opacity=".7"/>
<g filter="url(#b1)"><path d="M848 331v-16c3-3 6-2 9 2l5-12 3 3 4-9 4 7 4-6 5 14 2 17z" fill="#34602a"/><path d="M851 331l5-26M860 331l6-30M867 331l4-34M873 331l4-30M880 331l2-22" stroke="#5e8c48" stroke-width="1.300" fill="none"/><ellipse cx="902" cy="327" rx="13" ry="5" fill="#43323f" opacity=".8"/><path d="M893 318l8-1" stroke="#3d6a30" stroke-width="1.300"/></g>
<g filter="url(#b05)" fill="#e4e7dc"><ellipse cx="856" cy="296.500" rx="3.600" ry="6.500" transform="rotate(-10 856 296.500)"/><ellipse cx="867" cy="300" rx="3" ry="4.500" transform="rotate(8 867 300)"/><ellipse cx="873.500" cy="301.500" rx="3.200" ry="3.800"/><path d="M879.500 300c1-3 4-4.500 6.500-3.500 2-2 4.500-1.500 5.500.5 2.500 0 3.500 2 3 3.500l3 2.500c-2.500.5-5 0-7-1-3 1.500-6.500 1-8-.5z"/><ellipse cx="904.500" cy="316" rx="4.600" ry="3.600"/></g></g>
<!-- t3 leaf -->
<g clip-path="url(#c3)"><rect x="1025" y="286" width="75" height="45" fill="#0d110e"/><g filter="url(#b1)"><path d="M1064 295c-9-3-21 3-26 15 1 8 9 12 16 8 7-5 10-13 10-23z" fill="#2a6329"/><path d="M1065 295c8-2 18 3 24 13 1 7-5 11-12 8-7-4-12-11-12-21z" fill="#255a26"/><path d="M1062 298c-8 3-15 10-19 17" stroke="#3f8140" stroke-width="1.300" fill="none"/><path d="M1067 298c7 3 13 9 17 15" stroke="#387638" stroke-width="1.200" fill="none"/><path d="M1064 296c0 10 0 20-1 30" stroke="#0d110e" stroke-width="1.600" fill="none"/><ellipse cx="1044" cy="325" rx="10" ry="4" fill="#163816"/><ellipse cx="1034" cy="318" rx="5" ry="4" fill="#16301a"/><ellipse cx="1090" cy="293" rx="6" ry="4" fill="#1a211b"/></g></g>
<!-- t4 lake -->
<g clip-path="url(#c4)"><rect x="1183" y="283" width="98" height="36" fill="url(#gsky)"/>
<g filter="url(#b2)"><ellipse cx="1192" cy="287" rx="16" ry="6" fill="#767f96"/><ellipse cx="1250" cy="290" rx="34" ry="7" fill="#7f9bd0"/><ellipse cx="1212" cy="297" rx="26" ry="5" fill="#d4d2da"/><ellipse cx="1268" cy="300" rx="14" ry="3.500" fill="#8aa4cf"/><ellipse cx="1252" cy="305" rx="16" ry="2.500" fill="#eceef2"/><ellipse cx="1200" cy="309" rx="22" ry="3.500" fill="#d8cec9"/><ellipse cx="1258" cy="312" rx="26" ry="3" fill="#cbccd2"/></g>
<rect x="1183" y="319" width="98" height="23" fill="#505358"/><rect x="1183" y="327" width="98" height="5" fill="#62666c" filter="url(#b2)"/><rect x="1183" y="334" width="98" height="9" fill="#2a2b2e" filter="url(#b2)"/>
<g filter="url(#b05)"><path d="M1183 316.500c3-1 7-1 10-.5 3-1.500 7-1.500 10-.3 3-1.200 7-1.200 10 0 3-.8 5-.8 7 0 2-2.500 5-2.500 7-.5 3-2 6-1.500 8 0 3-1.200 6-1.200 9 0 3-2.500 6-2.500 8-.5 3-1 6-.5 8 .3 3-1.200 6-.8 8 0 3-.5 6 0 10 1v5.500c-10 1-25 1.500-40 1-12 1-25 1-36 .3-8 .4-15 0-22-.8z" fill="#3b3925"/><rect x="1183" y="317.300" width="98" height="4.500" fill="#3b3925"/><path d="M1183 319.600c15 .5 35 .7 52 .5 18 .2 33 0 46-.5v1.100h-98z" fill="#8a846e" opacity=".7"/><path d="M1188 323.500c5 1.300 10 1.300 14 0 6 1.800 12 1.300 16-.4 6 1.800 10 1.800 15 .4 5 1.300 10 .9 14-.4 5 1.300 10 1.300 15 0 4 .9 8 .9 12 0" stroke="#2a291f" stroke-width="2.400" fill="none" opacity=".85"/></g></g>
<!-- t5 mountain -->
<g clip-path="url(#c5)"><rect x="668" y="420" width="74" height="18" fill="url(#gsky2)"/><rect x="716" y="420" width="26" height="17" fill="#27467a" opacity=".75" filter="url(#b2)"/>
<g filter="url(#b1)"><ellipse cx="690" cy="426" rx="20" ry="4.500" fill="#cdd5e2"/><ellipse cx="712" cy="428" rx="14" ry="3" fill="#e8ecf2"/><ellipse cx="683" cy="431" rx="12" ry="2" fill="#8c9cb6"/><ellipse cx="700" cy="434.500" rx="30" ry="2.200" fill="#c3cfdc"/><ellipse cx="676" cy="423" rx="6" ry="2" fill="#5c6f92"/></g>
<rect x="668" y="437" width="74" height="28" fill="#1c1e14"/><rect x="668" y="436" width="74" height="5" fill="#2c3840" filter="url(#b1)"/><path d="M704 445l6-1 14 21h-20z" fill="#3a2b22" opacity=".9" filter="url(#b2)"/><rect x="668" y="457" width="74" height="8" fill="#0d0d0a" opacity=".7" filter="url(#b1)"/></g>
<!--/THS-->
<!-- cursor -->
<path d="M828.800 462.300v16.200l3.700-3.500 2.700 6.200 2.600-1.100-2.700-6.100h5.300z" fill="#111" stroke="#fff" stroke-width="1.100" stroke-linejoin="round"/>
</svg>
<!--/FDSVG-->
<!--/FD-->
</div>

<!-- DOCK -->
<div id="dock" class="abs">
<!--DK-->
<svg class="abs" style="left:0;top:0" width="1920" height="89" viewBox="0 990 1920 89">
<defs>
<linearGradient id="dsh" x1="0" y1="0" x2="0" y2="1"><stop offset="0" stop-color="#858585"/><stop offset=".15" stop-color="#9c9c9c"/><stop offset=".6" stop-color="#aeaeae"/><stop offset="1" stop-color="#c2c2c2"/></linearGradient>
<linearGradient id="dlip" x1="0" y1="0" x2="0" y2="1"><stop offset="0" stop-color="#f4f4f4"/><stop offset=".35" stop-color="#c9c9c9"/><stop offset="1" stop-color="#9b9b9b"/></linearGradient>
<radialGradient id="glow"><stop offset="0" stop-color="#fff"/><stop offset=".4" stop-color="#bfe6ff" stop-opacity=".9"/><stop offset="1" stop-color="#9ad4ff" stop-opacity="0"/></radialGradient>
<linearGradient id="gfin" x1="0" y1="0" x2="0" y2="1"><stop offset="0" stop-color="#a9c6ee"/><stop offset=".5" stop-color="#5c8fd8"/><stop offset="1" stop-color="#7aa7e6"/></linearGradient>
<linearGradient id="gfin2" x1="0" y1="0" x2="0" y2="1"><stop offset="0" stop-color="#eef1fa"/><stop offset=".5" stop-color="#c3ccec"/><stop offset="1" stop-color="#dfe5f6"/></linearGradient>
<radialGradient id="gmetal" cx=".5" cy=".5" r=".5"><stop offset="0" stop-color="#e6e6e6"/><stop offset=".6" stop-color="#b9b9b9"/><stop offset="1" stop-color="#8e8e8e"/></radialGradient>
<linearGradient id="gbook" x1="0" y1="0" x2="1" y2="1"><stop offset="0" stop-color="#e2bd7a"/><stop offset="1" stop-color="#b98a45"/></linearGradient>
<linearGradient id="gmsg" x1="0" y1="0" x2="0" y2="1"><stop offset="0" stop-color="#7cc4fb"/><stop offset="1" stop-color="#2a8ae6"/></linearGradient>
<linearGradient id="gmsg2" x1="0" y1="0" x2="0" y2="1"><stop offset="0" stop-color="#fff"/><stop offset="1" stop-color="#b7c6d8"/></linearGradient>
<radialGradient id="gsaf" cx=".5" cy=".45" r=".55"><stop offset="0" stop-color="#9fd2f6"/><stop offset=".7" stop-color="#3d8fdc"/><stop offset="1" stop-color="#1f5fae"/></radialGradient>
<radialGradient id="gblue" cx=".5" cy=".7" r=".7"><stop offset="0" stop-color="#33aef2"/><stop offset=".55" stop-color="#176ad0"/><stop offset="1" stop-color="#0a3588"/></radialGradient>
<linearGradient id="gsil" x1="0" y1="0" x2="0" y2="1"><stop offset="0" stop-color="#f2f2f2"/><stop offset=".5" stop-color="#9a9a9a"/><stop offset="1" stop-color="#d8d8d8"/></linearGradient>
<linearGradient id="gfold2" x1="0" y1="0" x2="0" y2="1"><stop offset="0" stop-color="#a9cbea"/><stop offset="1" stop-color="#7eabd6"/></linearGradient>
<linearGradient id="gtrash" x1="0" y1="0" x2="1" y2="0"><stop offset="0" stop-color="#555"/><stop offset=".3" stop-color="#b5b5b5"/><stop offset=".55" stop-color="#8a8a8a"/><stop offset=".8" stop-color="#c4c4c4"/><stop offset="1" stop-color="#4a4a4a"/></linearGradient>
<linearGradient id="gcur" x1="0" y1="0" x2="1" y2="0"><stop offset="0" stop-color="#c32214"/><stop offset=".5" stop-color="#f0402a"/><stop offset="1" stop-color="#c32214"/></linearGradient>
<linearGradient id="gscr" x1="0" y1="0" x2="0" y2="1"><stop offset="0" stop-color="#0f2a6a"/><stop offset=".6" stop-color="#2f7ad0"/><stop offset=".75" stop-color="#d6ecff"/><stop offset="1" stop-color="#1b4b9a"/></linearGradient>
<linearGradient id="gsea" x1="0" y1="0" x2="0" y2="1"><stop offset="0" stop-color="#16306e"/><stop offset=".55" stop-color="#2e5aa8"/><stop offset=".75" stop-color="#58b7c9"/><stop offset="1" stop-color="#b9e2df"/></linearGradient>
<filter id="db" x="-20%" y="-20%" width="140%" height="140%"><feGaussianBlur stdDeviation=".7"/></filter>
<filter id="db3" x="-30%" y="-30%" width="160%" height="160%"><feGaussianBlur stdDeviation="3"/></filter>
</defs>
<!-- shelf -->
<path d="M247 1031.400h1429.500l27 42.600h-1487z" fill="url(#dsh)"/>
<path d="M247 1031.400h1429.500" stroke="#7d7d7d" stroke-width="1"/>
<path d="M216.500 1074h1487l.5 5h-1488z" fill="url(#dlip)"/>
<path d="M1521 1036l13.500 34" stroke="#8a8a8a" stroke-width="1.200" stroke-dasharray="2 1.200"/>
<!--DI1-->
<!-- reflections / glows -->
<g filter="url(#db3)" opacity=".55"><ellipse cx="280" cy="1066" rx="22" ry="4" fill="#8fb2e6"/><ellipse cx="547" cy="1066" rx="22" ry="4" fill="#7bbcf0"/><ellipse cx="613" cy="1067" rx="20" ry="4" fill="#7fb6ea"/><ellipse cx="680" cy="1067" rx="20" ry="4" fill="#b9d66a"/><ellipse cx="1013" cy="1067" rx="22" ry="4" fill="#4c9ae8"/><ellipse cx="1079" cy="1067" rx="20" ry="4" fill="#8fc2d8"/><ellipse cx="1146" cy="1067" rx="22" ry="4" fill="#4c9ae8"/><ellipse cx="1279" cy="1067" rx="24" ry="4.500" fill="#3fb2f2"/><ellipse cx="1346" cy="1066" rx="22" ry="3" fill="#6b7a9a"/><ellipse cx="1580" cy="1066" rx="26" ry="4" fill="#9cc3e8"/><ellipse cx="812" cy="1067" rx="20" ry="3" fill="#d8d69a"/><ellipse cx="479" cy="1067" rx="20" ry="3" fill="#c9ae80"/></g>
<g><ellipse cx="279" cy="1076.500" rx="9" ry="2.600" fill="url(#glow)"/><ellipse cx="412.500" cy="1076.500" rx="9" ry="2.600" fill="url(#glow)"/><ellipse cx="613" cy="1076.500" rx="9" ry="2.600" fill="url(#glow)"/><ellipse cx="680" cy="1076.500" rx="9" ry="2.600" fill="url(#glow)"/><ellipse cx="1346" cy="1076.500" rx="9" ry="2.600" fill="url(#glow)"/><ellipse cx="1412.500" cy="1076.500" rx="9" ry="2.600" fill="url(#glow)"/><ellipse cx="1479" cy="1076.500" rx="9" ry="2.600" fill="url(#glow)"/></g>
<!-- Finder -->
<g><rect x="254" y="1014" width="52" height="38.500" fill="url(#gfin)"/><path d="M283 1014h23v38.500h-21.500c-.8-4-1-8-.8-12h-6c1-10 3-19 5.300-26.500z" fill="url(#gfin2)"/>
<path d="M288 1008.500c-5 9-8.500 20-9.500 30h6.500c-.5 7 .3 14 2 20" fill="none" stroke="#0c1020" stroke-width="1.700"/><path d="M262.500 1041c8 6.500 27 6.500 35.500 0" fill="none" stroke="#0c1020" stroke-width="1.700"/><rect x="266.300" y="1021" width="2" height="5.500" rx="1" fill="#0c1020"/><rect x="290" y="1021" width="2" height="5.500" rx="1" fill="#0c1020"/></g>
<!-- Launchpad -->
<g><ellipse cx="346.400" cy="1035" rx="28.900" ry="26.200" fill="#8a8a8a"/><ellipse cx="346.400" cy="1035" rx="27.300" ry="24.700" fill="url(#gmetal)"/><path d="M346.400 1035l-20-17a27.300 24.700 0 0 1 40 0zM346.400 1035l20 17a27.300 24.700 0 0 1-40 0z" fill="#fff" opacity=".13"/>
<path d="M362 1020.500c-7 .5-14 3.500-19.500 9.500l-8 1.500-5 6 6.500.5 3 3.500-2 6.500 7-3.500 3-7.500c6.500-4.500 12-9.500 15-16.500z" fill="#3c3c3c"/><circle cx="353" cy="1028" r="2.200" fill="#d6d6d6"/><path d="M337 1042.500c-3 .5-4.500 3-3.500 6 2.500.5 5-.5 6-3" fill="none" stroke="#3c3c3c" stroke-width="2"/></g>
<!-- Mail -->
<g transform="rotate(-10 412.500 1034)"><rect x="389.500" y="1009" width="46" height="50" fill="#f6f6f6" stroke="#fff" stroke-width="2.500" stroke-dasharray="2.200 1.700"/><rect x="393" y="1012.500" width="39" height="43" fill="#7ea8e2"/><rect x="393" y="1040" width="39" height="15.500" fill="#8db4ea"/>
<path d="M404.500 1017.500c2.500 1 4 3 4.500 6l2 8c5 1 10 3.500 14 7.500-5-1.500-9-2-12-1.500l1.500 6-3-1-2 3-1.500-7c-3-1-5-3-6.500-5.500 2 .5 4 .5 5.500 0l-2.500-8c-1-3-1-5.500 0-7.500z" fill="#6b4a2c"/><path d="M405 1018c2 1 3.300 3 3.700 5.500l1.300 6-2.500-1-2-6.500c-.7-1.500-.8-3-.5-4z" fill="#e6dfd0"/><path d="M411 1031.500c4 1 8 3 11.500 6-4-1-7.500-1.300-10.500-1z" fill="#3c2a1a"/>
<ellipse cx="401" cy="1049" rx="7" ry="3.500" fill="#5d8ed6" opacity=".8"/></g>
<!-- Contacts -->
<g><path d="M456 1013l42-5 7 3 3 46-43 4-6-2z" fill="#5a463f"/><path d="M462 1012.500l37-4.500 5.500 45-38.500 6z" fill="url(#gbook)"/><path d="M456 1013l6-.5 4 46.500-7 1z" fill="#6b4f45"/><path d="M503 1017l3.500-.5.600 6-3.500.5zM503.800 1025l3.500-.5.600 6-3.500.5zM504.500 1033l3.500-.5.600 6-3.500.5z" fill="#e8e3da"/><path d="M459 1059.500l45-6 1.500 3-44.500 6z" fill="#e9e2d2"/>
<text x="470.500" y="1043" font-family="'Liberation Sans',sans-serif" font-weight="bold" font-size="27" fill="#f1d9a6" opacity=".85" transform="rotate(-6 484 1034)">@</text></g>
<!-- Messages -->
<g><path d="M546 1009.500c16 0 28.500 8.500 28.500 19.500s-12.500 19.500-28.500 19.500c-3 0-6-.3-8.500-1-3 4-8.500 8-15.500 8.500 4-3 6-7 6-11-6.500-3.500-10.500-9.500-10.500-16 0-11 12.500-19.500 28.500-19.500z" fill="url(#gmsg)" stroke="#1f6fc8" stroke-width=".8"/><path d="M558 1032c10 0 18 5.500 18 12.500 0 3.500-2 6.500-5.500 9 0 3 1.500 5.500 4 7.500-4.500 0-8-1.500-10-4.500-2 .5-4 .8-6.500.8-10 0-18-5.800-18-12.800s8-12.500 18-12.500z" fill="url(#gmsg2)" stroke="#9fb0c4" stroke-width=".8"/><circle cx="550" cy="1044.500" r="2.300" fill="#7f9dc0"/><circle cx="558" cy="1044.500" r="2.300" fill="#7f9dc0"/><circle cx="566" cy="1044.500" r="2.300" fill="#7f9dc0"/></g>
<!-- Safari -->
<g><circle cx="613.400" cy="1010" r="2.300" fill="none" stroke="#a8a8a8" stroke-width="1.300"/><ellipse cx="613.400" cy="1036.900" rx="28" ry="25" fill="url(#gsil)" stroke="#6c6c6c" stroke-width=".8"/><ellipse cx="613.400" cy="1036.900" rx="23.300" ry="20.600" fill="url(#gsaf)" stroke="#3a3a3a" stroke-width="1.200"/><path d="M613.400 1018.500l2.500 16 15 2.500-15 2.500-2.500 16-2.500-16-15-2.500 15-2.500z" fill="#e6f1fb" opacity=".8"/><path d="M626.500 1023l-10.500 16.500-5-4.500z" fill="#d8452c"/><path d="M600.500 1051l10.500-16 5 4.500z" fill="#f4f6f8"/></g>
<!-- Chrome -->
<g transform="translate(679.800 1035.300) scale(1.085 1)"><circle r="25.800" fill="#e8432e"/><path d="M0 0L-22.300 -12.900A25.800 25.800 0 0 0 -1.500 25.760L11.200 3.700z" fill="#3fa84b"/><path d="M0 0L11.200 3.700L-1.500 25.760A25.800 25.800 0 0 0 22.800 -12h-25z" fill="#fbcd1f"/><path d="M-22.300 -12.900A25.800 25.800 0 0 1 22.800 -12L0 -12z" fill="#e8432e"/><circle r="12" fill="#f4f4f4"/><circle r="9.600" fill="#3b8de0"/></g>
<!--/DI1-->
<!--DI2-->
<!-- Calendar -->
<g transform="rotate(-4 746 1034)"><path d="M722 1053l50-1 3 7-52 3z" fill="#3e3e3e"/><path d="M721 1022h50l3 31-52 3z" fill="#fbfbfb"/><path d="M722 1051l52-1.500.5 4-52.500 2.500z" fill="#d9d9d9"/><path d="M721.500 1012.500q25-2.500 49 0l.5 12h-50z" fill="#d0453d"/><path d="M721.500 1024.500h49.500" stroke="#a92f2a" stroke-width="1"/>
<text x="725.500" y="1023" font-family="'Liberation Sans',sans-serif" font-weight="bold" font-size="8.500" fill="#fff" textLength="13" lengthAdjust="spacingAndGlyphs">JUL</text>
<text x="731" y="1050.500" font-family="'Liberation Sans',sans-serif" font-weight="bold" font-size="29" fill="#141414" stroke="#141414" stroke-width=".5" textLength="31" lengthAdjust="spacingAndGlyphs">10</text>
<rect x="730.500" y="1006" width="2.600" height="10" rx="1.300" fill="#b9b9b9" stroke="#777" stroke-width=".5"/><rect x="755.500" y="1005" width="2.600" height="10" rx="1.300" fill="#b9b9b9" stroke="#777" stroke-width=".5"/></g>
<!-- Notes -->
<g><path d="M788 1013.500l47-5 4.500 46-43.500 6.500z" fill="#f3ec86"/><path d="M788 1013.500l47-5 .5 4.500-47 5.500z" fill="#5a3a30"/><path d="M796 1061l43.500-6.500-.3-2.500-43.500 6.500z" fill="#cfc66a"/>
<g stroke="#4a4526" stroke-width=".9" fill="none" opacity=".85"><path d="M794 1023.500c8-1.500 20-3 30-3.500M794.500 1027.500c8-1 18-2.500 27-3M795 1031.500c9-1.500 20-2.500 31-3.500M795.500 1035.500c6-.8 13-1.600 19-2M797 1041.500c9-1.500 20-2.800 31-3.500M797.500 1045.500c9-1.300 19-2.500 29-3M798 1049.500c9-1.300 19-2.300 28-3M798.500 1053.500c5-.8 12-1.500 17-2" stroke-dasharray="3.500 1.200 2 1"/></g></g>
<!-- FaceTime -->
<g><rect x="850.800" y="1017.300" width="39.800" height="36" rx="7" fill="#dcdcdc" stroke="#9c9c9c" stroke-width="1.200"/><rect x="852.500" y="1019" width="36.400" height="16" rx="6" fill="#f1f1f1" opacity=".7"/><ellipse cx="871" cy="1034.500" rx="14" ry="12.800" fill="#1c2a44" stroke="#8c8c8c" stroke-width="1"/><ellipse cx="871" cy="1034.500" rx="9.500" ry="8.600" fill="#173a78"/><ellipse cx="871" cy="1034.500" rx="5" ry="4.500" fill="#2358a6"/><ellipse cx="868.500" cy="1030.500" rx="3" ry="1.500" fill="#9ec4ee" opacity=".8"/><path d="M892 1034.500l16.600-14.800v29.700z" fill="#d4d4d4" stroke="#a6a6a6" stroke-width=".8"/></g>
<!-- Photo Booth -->
<g><rect x="916.400" y="1006.400" width="47" height="55.500" rx="2" fill="#c9c9c9" stroke="#8d8d8d" stroke-width="1"/><rect x="919.500" y="1011" width="40.500" height="37" fill="url(#gcur)"/><path d="M923 1011v37M927.500 1011v37M932 1011v37M936.500 1011v37M941 1011v37M945.500 1011v37M950 1011v37M954.500 1011v37" stroke="#a81a10" stroke-width="1" opacity=".8"/><rect x="919.500" y="1008" width="40.500" height="3.500" fill="#e9e9e9"/><rect x="919.500" y="1048" width="40.500" height="11" fill="#bdb5ad"/><path d="M926 1057.500l3.500-9.500h13l3.500 9.500M929 1051.500h14M936 1048v9.500" stroke="#2c2c2c" stroke-width="1.500" fill="none"/>
<g transform="rotate(12 962 1041)"><rect x="952" y="1022.500" width="19.500" height="37" fill="#f0f0f0" stroke="#9a9a9a" stroke-width=".6"/><rect x="954" y="1024.500" width="15.500" height="10" fill="#3a2a2a"/><rect x="954" y="1036" width="15.500" height="10" fill="#3a2a2a"/><rect x="954" y="1047.500" width="15.500" height="10" fill="#3a2a2a"/><ellipse cx="961.800" cy="1029.800" rx="4" ry="4.200" fill="#d8a58e"/><ellipse cx="961.800" cy="1041.300" rx="4" ry="4.200" fill="#d8a58e"/><ellipse cx="961.800" cy="1052.800" rx="4" ry="4.200" fill="#d8a58e"/></g></g>
<!-- iTunes -->
<g><ellipse cx="1013.750" cy="1034.500" rx="28.900" ry="26.500" fill="url(#gsil)" stroke="#7a8797" stroke-width=".8"/><ellipse cx="1013.750" cy="1034.500" rx="26" ry="23.700" fill="url(#gblue)"/><ellipse cx="1013.750" cy="1022" rx="20" ry="10" fill="#6cc0fa" opacity=".35"/>
<path d="M1006.500 1021l19-3.500v23.500c0 3-2.500 5-6 5.200-3 .2-5-1.200-5-3.300 0-2.300 2.500-4 5.500-4.200.9 0 1.700 0 2.500.3v-14l-13 2.400v17.600c0 3-2.500 5-6 5.200-3 .2-5-1.200-5-3.300 0-2.300 2.500-4 5.500-4.200.9 0 1.700 0 2.500.3z" fill="#eef4fb"/></g>
<!-- image + knife -->
<g><g transform="rotate(-9 1079 1037)"><rect x="1051.500" y="1017" width="55" height="40" fill="#f4f4f4" stroke="#b9b9b9" stroke-width=".8"/><rect x="1054" y="1019.500" width="50" height="35" fill="url(#gsea)"/><path d="M1054 1019.500h15l-13 18z" fill="#0c1220"/><path d="M1069 1019.500l4 12-17 6z" fill="#dfe3e8"/></g><path d="M1103 1006l6 1.500-32 52-8-4.500z" fill="#2a2d20"/><path d="M1099 1012l4.500 2.500-29.500 45-5.500-3.500z" fill="#b7c43a"/><path d="M1103.500 1005.500l5.500 1.500-9 14-4.500-2.500z" fill="#dcdcdc"/><path d="M1090 1030l4 2.500-10 15-4-2.500z" fill="#1a1a1a"/></g>
<!-- App Store -->
<g><ellipse cx="1146.250" cy="1035" rx="28.500" ry="26" fill="url(#gsil)" stroke="#7a8797" stroke-width=".8"/><ellipse cx="1146.250" cy="1035" rx="25.800" ry="23.400" fill="url(#gblue)"/><ellipse cx="1146.250" cy="1022" rx="20" ry="10" fill="#6cc0fa" opacity=".3"/>
<g stroke="#eef4fb" stroke-width="3.600" stroke-linecap="butt" fill="none"><path d="M1147.500 1019.500l-14 25"/><path d="M1144.500 1019.500l14 25"/></g><rect x="1128.500" y="1033" width="35.500" height="4" fill="#eef4fb"/><path d="M1132.500 1046.500l2-3.500 2.500 1.500z" fill="#eef4fb"/></g>
<!-- System Preferences -->
<g><clipPath id="csp"><rect x="1187.500" y="1015.500" width="51.500" height="39"/></clipPath><rect x="1184" y="1012" width="58.500" height="46" rx="2" fill="#c4c4c4" stroke="#8e8e8e" stroke-width="1"/><rect x="1187.500" y="1015.500" width="51.500" height="39" fill="#565656"/><g clip-path="url(#csp)"><g transform="translate(1215 1038)"><g fill="#b9b9b9"><circle r="15.500"/><g id="gtooth"><rect x="-2.500" y="-19.500" width="5" height="6"/><rect x="-2.500" y="13.500" width="5" height="6"/></g><use href="#gtooth" transform="rotate(30)"/><use href="#gtooth" transform="rotate(60)"/><use href="#gtooth" transform="rotate(90)"/><use href="#gtooth" transform="rotate(120)"/><use href="#gtooth" transform="rotate(150)"/></g><circle r="11.500" fill="#484848"/><path d="M-1.800 -12h3.600v24h-3.600z" fill="#b9b9b9"/><path d="M-1.800 -12h3.600v24h-3.600z" fill="#b9b9b9" transform="rotate(60)"/><path d="M-1.800 -12h3.600v24h-3.600z" fill="#b9b9b9" transform="rotate(120)"/><circle r="4.500" fill="#d9d9d9"/><circle r="1.700" fill="#7a7a7a"/></g><circle cx="1193" cy="1051" r="8" fill="#8a8a8a" opacity=".7"/><circle cx="1237" cy="1051" r="8" fill="#8a8a8a" opacity=".7"/></g></g>
<!-- Skype -->
<g><circle cx="1268" cy="1025" r="16.500" fill="#1fa4ea"/><circle cx="1291" cy="1045" r="16.500" fill="#1fa4ea"/><ellipse cx="1279.500" cy="1034.800" rx="25" ry="23" fill="#1fa4ea"/>
<text x="1263.500" y="1053.500" font-family="'Liberation Sans',sans-serif" font-weight="bold" font-size="50" fill="#fff" textLength="32" lengthAdjust="spacingAndGlyphs">S</text></g>
<!-- Photoshop -->
<g><rect x="1317.600" y="1008" width="57.500" height="50.500" fill="#191730" stroke="#26c4ea" stroke-width="2.200"/><text x="1328" y="1047" font-family="'Liberation Sans',sans-serif" font-size="37" fill="#4cc3f1" stroke="#4cc3f1" stroke-width=".9" textLength="37" lengthAdjust="spacingAndGlyphs">Ps</text></g>
<!-- Movie -->
<g><g fill="#cfcfcf" stroke="#7c7c7c" stroke-width=".8"><ellipse cx="1396" cy="1021" rx="11.500" ry="10.500"/><ellipse cx="1418" cy="1018" rx="11.500" ry="10.500"/></g><g fill="#4c4c4c"><circle cx="1396" cy="1015" r="2.200"/><circle cx="1390.500" cy="1021" r="2.200"/><circle cx="1401.500" cy="1021" r="2.200"/><circle cx="1396" cy="1027" r="2.200"/><circle cx="1418" cy="1012" r="2.200"/><circle cx="1412.500" cy="1018" r="2.200"/><circle cx="1423.500" cy="1018" r="2.200"/><circle cx="1418" cy="1024" r="2.200"/></g>
<path d="M1386 1030l44-4 3 30-43 4z" fill="#9c9c9c" stroke="#6e6e6e" stroke-width="1"/><path d="M1390 1033.500l37-3.500 2.500 22-36.500 3.500z" fill="url(#gscr)"/><path d="M1432 1036l6-3 5.500 1v12l-5.500 1.500-6-3z" fill="#a9a9a9" stroke="#777" stroke-width=".6"/></g>
<!-- Preview (raised) -->
<g><g transform="rotate(-14 1478 1010)"><rect x="1456" y="998" width="42" height="28" fill="#f3f1ea" stroke="#bdbdbd" stroke-width=".6"/><rect x="1458.500" y="1000.500" width="37" height="23" fill="#b7a779"/></g><g transform="rotate(-20 1476 1025)"><rect x="1452" y="1006" width="47" height="34" fill="#f6f6f6" stroke="#c2c2c2" stroke-width=".6"/><rect x="1455" y="1009" width="41" height="28" fill="#9dbbe6"/><rect x="1455" y="1027" width="41" height="10" fill="#dfe8f2"/><path d="M1470 1037c0-8 2-13 6-13s6 5 6 13z" fill="#2a3a5a"/><ellipse cx="1476" cy="1021" rx="4" ry="4.500" fill="#6a4a3a"/></g>
<ellipse cx="1497" cy="1036" rx="14" ry="7.500" fill="#b9b9b9" stroke="#6e6e6e" stroke-width=".8"/><ellipse cx="1497" cy="1034" rx="10" ry="5" fill="#e6e6e6"/><ellipse cx="1495.500" cy="1025.500" rx="12" ry="11" fill="#2a2a2a" stroke="#9a9a9a" stroke-width="1.500"/><ellipse cx="1495.500" cy="1022.500" rx="8.500" ry="7" fill="#dfe8ec"/><ellipse cx="1495.500" cy="1022.500" rx="5" ry="4" fill="#f8fafb"/></g>
<!-- Downloads folder -->
<g><path d="M1551 1019.500a2.500 2.500 0 0 1 2.500-2.500h16a2 2 0 0 1 2 1.500l1 3h36a2.500 2.500 0 0 1 2.500 2.500v4h-60z" fill="#7fa9d2"/><path d="M1548.500 1027a2 2 0 0 1 2-2h59a2 2 0 0 1 2 2l-1 28a2 2 0 0 1-2 2h-57a2 2 0 0 1-2-2z" fill="url(#gfold2)"/><circle cx="1579.700" cy="1039" r="14.500" fill="#6f9ac6" opacity=".8"/><path d="M1576.500 1029.500h6.500v5h4l-7.200 6.500-7.200-6.500h4z" fill="#9fc2e4"/><rect x="1575" y="1043" width="9.500" height="6" rx="1" fill="none" stroke="#9fc2e4" stroke-width="1.600"/></g>
<!-- Trash -->
<g><defs><pattern id="mesh" width="2.600" height="2.600" patternUnits="userSpaceOnUse" patternTransform="rotate(45)"><rect width="2.600" height="2.600" fill="#2a2a2a"/><rect width="1.500" height="1.500" fill="#bdbdbd"/></pattern><linearGradient id="gtsh" x1="0" y1="0" x2="1" y2="0"><stop offset="0" stop-color="#000" stop-opacity=".55"/><stop offset=".3" stop-color="#fff" stop-opacity=".12"/><stop offset=".6" stop-color="#000" stop-opacity=".1"/><stop offset=".82" stop-color="#fff" stop-opacity=".1"/><stop offset="1" stop-color="#000" stop-opacity=".6"/></linearGradient></defs>
<path d="M1624 1016l7.500 39c0 3 6 5.500 15 5.500s15-2.500 15-5.500l7.500-39z" fill="url(#mesh)"/><path d="M1624 1016l7.500 39c0 3 6 5.500 15 5.500s15-2.500 15-5.500l7.500-39z" fill="url(#gtsh)"/>
<path d="M1631 1052.500c0 3 6.500 5 15.500 5s15.500-2 15.500-5l-.7 3.500c0 2.800-6 5-14.800 5s-14.800-2.200-14.800-5z" fill="#d9d9d9" stroke="#777" stroke-width=".6"/>
<ellipse cx="1646.500" cy="1015.500" rx="23" ry="6.500" fill="#5a5a5a" stroke="#cfcfcf" stroke-width="2.200"/><ellipse cx="1640" cy="1016" rx="8" ry="4.200" fill="#f2f2f2"/><ellipse cx="1655" cy="1015.500" rx="8.500" ry="4.500" fill="#dcdcdc"/><ellipse cx="1647" cy="1018.500" rx="6" ry="2.500" fill="#b5b5b5"/></g>
<!--/DI2-->
</svg>
<!--/DK-->
</div>
</body>
</html>
